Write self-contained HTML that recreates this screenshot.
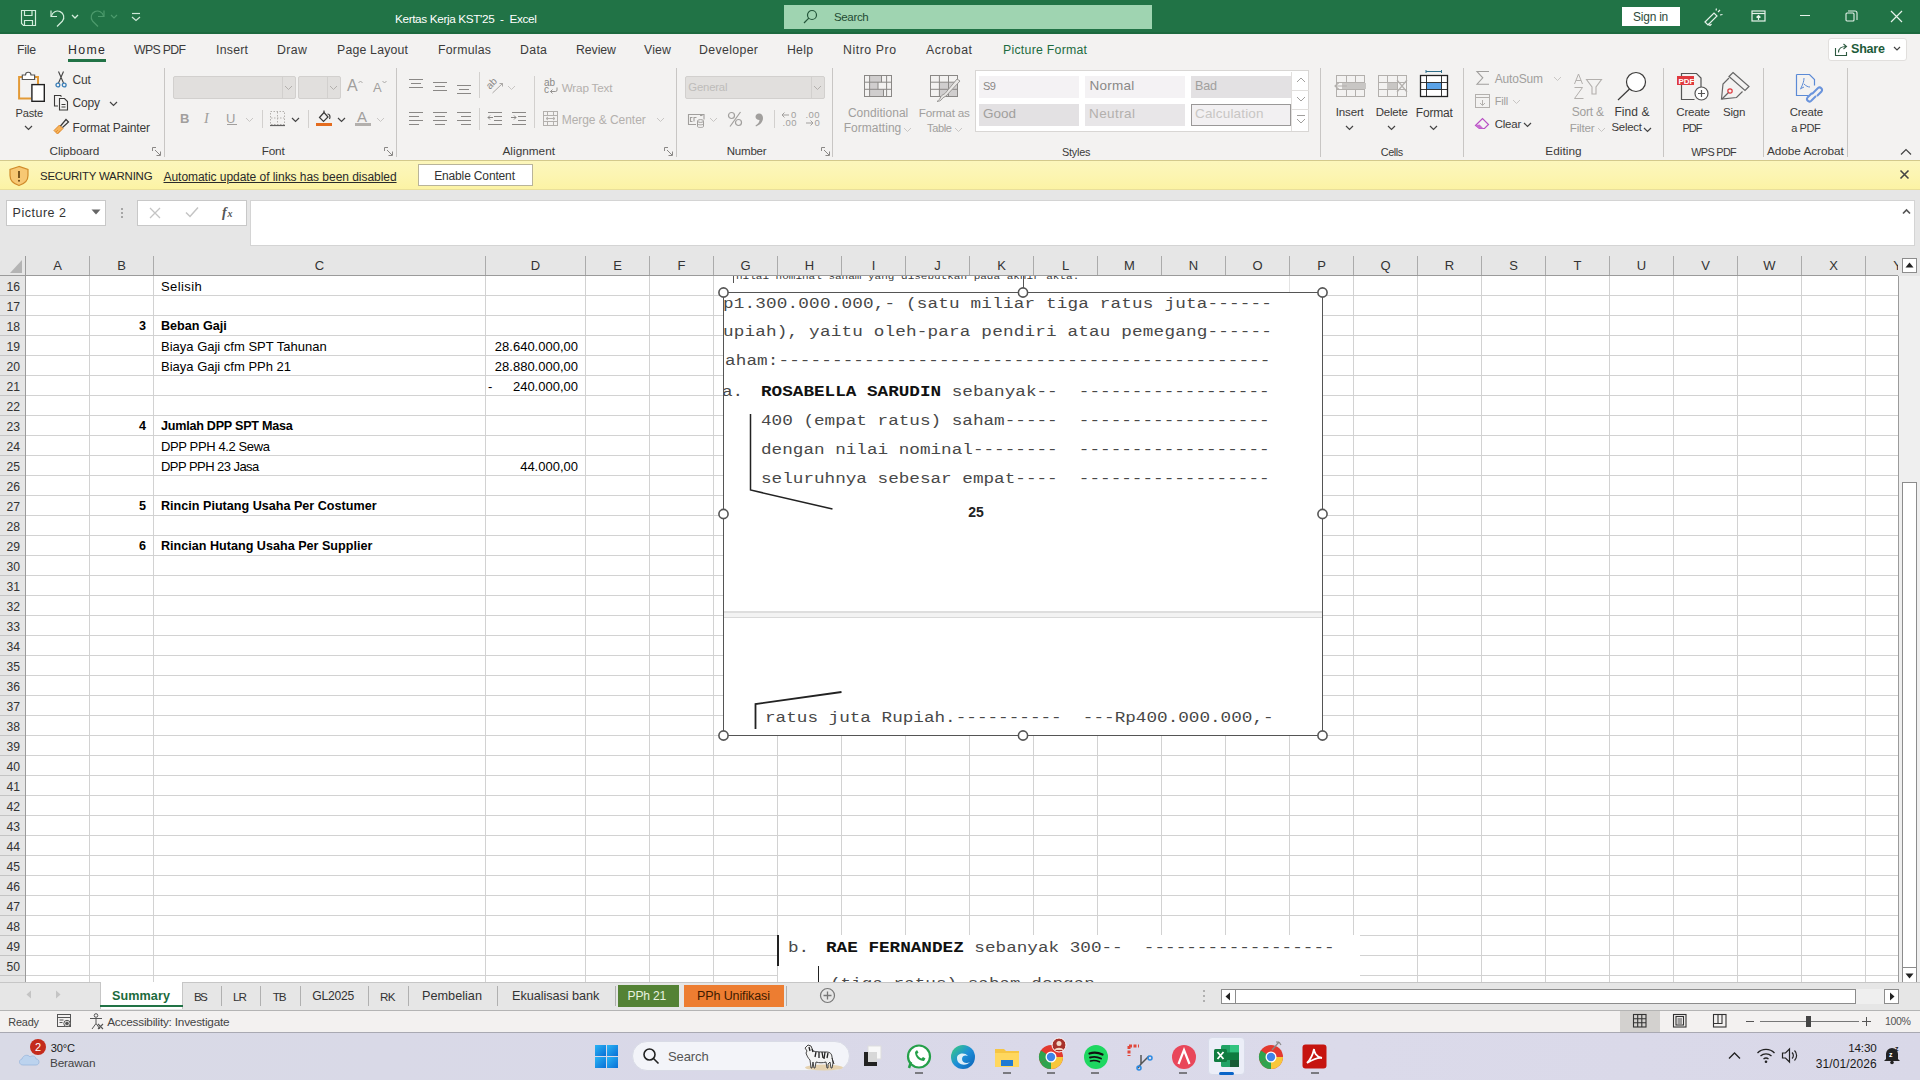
<!DOCTYPE html><html><head><meta charset="utf-8"><style>
html,body{margin:0;padding:0;width:1920px;height:1080px;overflow:hidden;background:#fff;}
body{position:relative;font-family:"Liberation Sans",sans-serif;}
.t{position:absolute;white-space:pre;line-height:1;}
.r{position:absolute;box-sizing:border-box;}
.s{position:absolute;overflow:visible;}
</style></head><body>
<div class="r" style="left:0px;top:0px;width:1920px;height:34px;background:#217346;"></div>
<div class="r" style="left:0px;top:32px;width:1920px;height:2px;background:#1c6a3f;"></div>
<svg class="s" style="left:19px;top:9px;" width="20" height="18" viewBox="0 0 20 18"><g fill="none" stroke="#d4eedd" stroke-width="1.2"><path d="M2.5 1.5h14v15h-12l-2-2z"/><path d="M5.5 1.5v5h7.5v-5"/><path d="M5.5 16.5v-5h8v5"/></g></svg>
<svg class="s" style="left:49px;top:8px;" width="18" height="20" viewBox="0 0 18 20"><g fill="none" stroke="#d4eedd" stroke-width="1.2"><path d="M2 2.5v6h6"/><path d="M2.5 8A6.2 6.2 0 1 1 13.5 13L8 18.5"/></g></svg>
<svg class="s" style="left:71px;top:14px;" width="8" height="6" viewBox="0 0 8 6"><path d="M1 1l3 3 3-3" fill="none" stroke="#d4eedd" stroke-width="1.3"/></svg>
<svg class="s" style="left:88px;top:8px;" width="18" height="20" viewBox="0 0 18 20"><g fill="none" stroke="#4c9a6c" stroke-width="1.2"><path d="M16 2.5v6h-6"/><path d="M15.5 8A6.2 6.2 0 1 0 4.5 13L10 18.5"/></g></svg>
<svg class="s" style="left:110px;top:14px;" width="8" height="6" viewBox="0 0 8 6"><path d="M1 1l3 3 3-3" fill="none" stroke="#4c9a6c" stroke-width="1.2"/></svg>
<svg class="s" style="left:130px;top:12px;" width="12" height="10" viewBox="0 0 12 10"><g fill="none" stroke="#cfe8d8" stroke-width="1.2"><path d="M2 1.5h8"/><path d="M2 5l4 3.5 4-3.5"/></g></svg>
<div class="t" style="top:12.53px;font-size:11.78px;color:#ffffff;font-weight:normal;font-family:'Liberation Sans', sans-serif;letter-spacing:-0.364px;left:395.0px;">Kertas Kerja KST'25  -  Excel</div>
<div class="r" style="left:784px;top:5px;width:368px;height:24px;background:#9fd4b1;"></div>
<svg class="s" style="left:802px;top:9px;" width="16" height="16" viewBox="0 0 16 16"><g fill="none" stroke="#24553a" stroke-width="1.2"><circle cx="10" cy="6" r="4.5"/><path d="M6.8 9.2L2 14"/></g></svg>
<div class="t" style="top:11.97px;font-size:11.5px;color:#1f4b33;font-weight:normal;font-family:'Liberation Sans', sans-serif;letter-spacing:-0.351px;left:834.0px;">Search</div>
<div class="r" style="left:1622px;top:7px;width:58px;height:19px;background:#ffffff;"></div>
<div class="t" style="top:11.60px;font-size:11.93px;color:#2d4a3b;font-weight:normal;font-family:'Liberation Sans', sans-serif;letter-spacing:-0.201px;left:1633.0px;">Sign in</div>
<svg class="s" style="left:1703px;top:8px;" width="22" height="18" viewBox="0 0 22 18"><g fill="none" stroke="#e6f2ea" stroke-width="1.2"><path d="M2 14l9-9 3 3-9 9z"/><path d="M5 16l2 1.5 1.5-1.5"/><path d="M15 4l2-2M17 7l2.5-.5M13 2.5l.5-2"/></g></svg>
<svg class="s" style="left:1751px;top:10px;" width="16" height="13" viewBox="0 0 16 13"><g fill="none" stroke="#e6f2ea" stroke-width="1.2"><rect x="1" y="1" width="13" height="10"/><path d="M1 3.5h13"/><path d="M7.5 10V5.5M5.5 7.5l2-2 2 2"/></g></svg>
<div class="r" style="left:1800px;top:15px;width:10px;height:1px;background:#e6f2ea;"></div>
<svg class="s" style="left:1845px;top:10px;" width="13" height="13" viewBox="0 0 13 13"><g fill="none" stroke="#e6f2ea" stroke-width="1.1"><rect x="1" y="3" width="8" height="8" rx="1"/><path d="M3 1h7a2 2 0 0 1 2 2v7"/></g></svg>
<svg class="s" style="left:1890px;top:10px;" width="13" height="13" viewBox="0 0 13 13"><g stroke="#e6f2ea" stroke-width="1.2"><path d="M1 1l11 11M12 1L1 12"/></g></svg>
<div class="r" style="left:0px;top:34px;width:1920px;height:126px;background:#f3f2f1;"></div>
<div class="t" style="top:43.59px;font-size:12.3px;color:#3b3b3b;font-weight:normal;font-family:'Liberation Sans', sans-serif;letter-spacing:-0.268px;left:17px;">File</div>
<div class="t" style="top:43.59px;font-size:12.3px;color:#2b2b2b;font-weight:normal;font-family:'Liberation Sans', sans-serif;letter-spacing:1.386px;left:68px;">Home</div>
<div class="t" style="top:43.59px;font-size:12.3px;color:#3b3b3b;font-weight:normal;font-family:'Liberation Sans', sans-serif;letter-spacing:-0.671px;left:134px;">WPS PDF</div>
<div class="t" style="top:43.59px;font-size:12.3px;color:#3b3b3b;font-weight:normal;font-family:'Liberation Sans', sans-serif;letter-spacing:0.25px;left:216px;">Insert</div>
<div class="t" style="top:43.59px;font-size:12.3px;color:#3b3b3b;font-weight:normal;font-family:'Liberation Sans', sans-serif;letter-spacing:0.426px;left:277px;">Draw</div>
<div class="t" style="top:43.59px;font-size:12.3px;color:#3b3b3b;font-weight:normal;font-family:'Liberation Sans', sans-serif;letter-spacing:0.194px;left:337px;">Page Layout</div>
<div class="t" style="top:43.59px;font-size:12.3px;color:#3b3b3b;font-weight:normal;font-family:'Liberation Sans', sans-serif;letter-spacing:0.244px;left:438px;">Formulas</div>
<div class="t" style="top:43.59px;font-size:12.3px;color:#3b3b3b;font-weight:normal;font-family:'Liberation Sans', sans-serif;letter-spacing:0.328px;left:520px;">Data</div>
<div class="t" style="top:43.59px;font-size:12.3px;color:#3b3b3b;font-weight:normal;font-family:'Liberation Sans', sans-serif;letter-spacing:-0.069px;left:576px;">Review</div>
<div class="t" style="top:43.59px;font-size:12.3px;color:#3b3b3b;font-weight:normal;font-family:'Liberation Sans', sans-serif;letter-spacing:0.185px;left:644px;">View</div>
<div class="t" style="top:43.59px;font-size:12.3px;color:#3b3b3b;font-weight:normal;font-family:'Liberation Sans', sans-serif;letter-spacing:0.364px;left:699px;">Developer</div>
<div class="t" style="top:43.59px;font-size:12.3px;color:#3b3b3b;font-weight:normal;font-family:'Liberation Sans', sans-serif;letter-spacing:0.241px;left:787px;">Help</div>
<div class="t" style="top:43.59px;font-size:12.3px;color:#3b3b3b;font-weight:normal;font-family:'Liberation Sans', sans-serif;letter-spacing:0.56px;left:843px;">Nitro Pro</div>
<div class="t" style="top:43.59px;font-size:12.3px;color:#3b3b3b;font-weight:normal;font-family:'Liberation Sans', sans-serif;letter-spacing:0.604px;left:926px;">Acrobat</div>
<div class="t" style="top:43.59px;font-size:12.3px;color:#1d6b40;font-weight:normal;font-family:'Liberation Sans', sans-serif;letter-spacing:0.259px;left:1003px;">Picture Format</div>
<div class="r" style="left:68px;top:59px;width:38px;height:3px;background:#217346;"></div>
<div class="r" style="left:1828px;top:38px;width:79px;height:23px;background:#ffffff;border:1px solid #e1dfdd;border-radius:3px;"></div>
<svg class="s" style="left:1834px;top:42px;" width="16" height="15" viewBox="0 0 16 15"><g fill="none" stroke="#2d5a40" stroke-width="1.1"><path d="M1.5 6v7.5h11V10"/><path d="M4.5 10.5c0-4 3-6 7.5-6"/><path d="M9.5 2l3 2.5-3 2.5"/></g></svg>
<div class="t" style="top:43.40px;font-size:12.52px;color:#1e5b3a;font-weight:bold;font-family:'Liberation Sans', sans-serif;letter-spacing:-0.201px;left:1851.0px;">Share</div>
<svg class="s" style="left:1893px;top:46px;" width="8" height="6" viewBox="0 0 8 6"><path d="M1 1l3 3 3-3" fill="none" stroke="#444" stroke-width="1.2"/></svg>
<div class="r" style="left:164px;top:68px;width:1px;height:89px;background:#c8c6c4;"></div>
<div class="r" style="left:396px;top:68px;width:1px;height:89px;background:#c8c6c4;"></div>
<div class="r" style="left:676px;top:68px;width:1px;height:89px;background:#c8c6c4;"></div>
<div class="r" style="left:832px;top:68px;width:1px;height:89px;background:#c8c6c4;"></div>
<div class="r" style="left:1320px;top:68px;width:1px;height:89px;background:#c8c6c4;"></div>
<div class="r" style="left:1463px;top:68px;width:1px;height:89px;background:#c8c6c4;"></div>
<div class="r" style="left:1663px;top:68px;width:1px;height:89px;background:#c8c6c4;"></div>
<div class="r" style="left:1763px;top:68px;width:1px;height:89px;background:#c8c6c4;"></div>
<div class="r" style="left:1847px;top:68px;width:1px;height:89px;background:#c8c6c4;"></div>
<div class="t" style="top:146.01px;font-size:11.8px;color:#3b3a39;font-weight:normal;font-family:'Liberation Sans', sans-serif;letter-spacing:-0.088px;left:49.6px;">Clipboard</div>
<div class="t" style="top:146.01px;font-size:11.8px;color:#3b3a39;font-weight:normal;font-family:'Liberation Sans', sans-serif;letter-spacing:-0.2px;left:261.7px;">Font</div>
<div class="t" style="top:146.01px;font-size:11.8px;color:#3b3a39;font-weight:normal;font-family:'Liberation Sans', sans-serif;letter-spacing:0.006px;left:502.5px;">Alignment</div>
<div class="t" style="top:146.24px;font-size:11.53px;color:#3b3a39;font-weight:normal;font-family:'Liberation Sans', sans-serif;letter-spacing:-0.198px;left:726.7px;">Number</div>
<div class="t" style="top:146.81px;font-size:10.86px;color:#3b3a39;font-weight:normal;font-family:'Liberation Sans', sans-serif;letter-spacing:-0.239px;left:1062.0px;">Styles</div>
<div class="t" style="top:146.81px;font-size:10.86px;color:#3b3a39;font-weight:normal;font-family:'Liberation Sans', sans-serif;letter-spacing:-0.416px;left:1380.8px;">Cells</div>
<div class="t" style="top:146.01px;font-size:11.8px;color:#3b3a39;font-weight:normal;font-family:'Liberation Sans', sans-serif;letter-spacing:0.049px;left:1545.3px;">Editing</div>
<div class="t" style="top:146.81px;font-size:10.86px;color:#3b3a39;font-weight:normal;font-family:'Liberation Sans', sans-serif;letter-spacing:-0.678px;left:1691.3px;">WPS PDF</div>
<div class="t" style="top:146.01px;font-size:11.8px;color:#3b3a39;font-weight:normal;font-family:'Liberation Sans', sans-serif;letter-spacing:-0.059px;left:1767.0px;">Adobe Acrobat</div>
<svg class="s" style="left:152px;top:147px;" width="9" height="9" viewBox="0 0 9 9"><g fill="none" stroke="#8a8886" stroke-width="1"><path d="M0.5 4V0.5H4"/><path d="M3 3l5 5M8.5 4.5v4h-4"/></g></svg>
<svg class="s" style="left:384px;top:147px;" width="9" height="9" viewBox="0 0 9 9"><g fill="none" stroke="#8a8886" stroke-width="1"><path d="M0.5 4V0.5H4"/><path d="M3 3l5 5M8.5 4.5v4h-4"/></g></svg>
<svg class="s" style="left:664px;top:147px;" width="9" height="9" viewBox="0 0 9 9"><g fill="none" stroke="#8a8886" stroke-width="1"><path d="M0.5 4V0.5H4"/><path d="M3 3l5 5M8.5 4.5v4h-4"/></g></svg>
<svg class="s" style="left:821px;top:147px;" width="9" height="9" viewBox="0 0 9 9"><g fill="none" stroke="#8a8886" stroke-width="1"><path d="M0.5 4V0.5H4"/><path d="M3 3l5 5M8.5 4.5v4h-4"/></g></svg>
<svg class="s" style="left:1900px;top:148px;" width="12" height="8" viewBox="0 0 12 8"><path d="M1 6.5l5-5 5 5" fill="none" stroke="#444" stroke-width="1.2"/></svg>
<svg class="s" style="left:14px;top:68px;" width="34" height="36" viewBox="0 0 34 36"><path d="M8.5 9H5.1V30.5H17" fill="none" stroke="#e39a36" stroke-width="2"/><path d="M20.6 9H24V16" fill="none" stroke="#e39a36" stroke-width="2"/><path d="M8.3 11.5V7H11.5A2.75 2.75 0 0 1 17 7H20.6V11.5Z" fill="#fff" stroke="#555" stroke-width="1.2"/><rect x="17.9" y="16.6" width="12.4" height="16.7" fill="#fff" stroke="#222" stroke-width="1.4"/></svg>
<div class="t" style="top:107.62px;font-size:11.08px;color:#3b3a39;font-weight:normal;font-family:'Liberation Sans', sans-serif;letter-spacing:-0.202px;left:15.6px;">Paste</div>
<svg class="s" style="left:24px;top:125px;" width="9" height="6" viewBox="0 0 9 6"><path d="M1 1l3.5 3.5 3.5-3.5" fill="none" stroke="#444" stroke-width="1.2"/></svg>
<svg class="s" style="left:54px;top:70px;" width="14" height="18" viewBox="0 0 14 18"><g fill="none"><path d="M4.5 1.5L9.5 13M9.5 1.5L4.5 13" stroke="#444" stroke-width="1.1"/><circle cx="3.9" cy="15" r="1.9" stroke="#3b7fb8" stroke-width="1.3"/><circle cx="10.2" cy="15" r="1.9" stroke="#3b7fb8" stroke-width="1.3"/></g></svg>
<div class="t" style="top:74.04px;font-size:12px;color:#3b3a39;font-weight:normal;font-family:'Liberation Sans', sans-serif;letter-spacing:-0.18px;left:72.5px;">Cut</div>
<svg class="s" style="left:53px;top:94px;" width="17" height="17" viewBox="0 0 17 17"><g fill="none" stroke="#3b3a39" stroke-width="1.1"><path d="M5 12H1.5V1.5h6l1 1"/><path d="M6.5 4.5h5l3 3v8.5h-8z"/><path d="M8.5 10.5h4M8.5 13h4"/></g></svg>
<div class="t" style="top:97.34px;font-size:12px;color:#3b3a39;font-weight:normal;font-family:'Liberation Sans', sans-serif;letter-spacing:-0.173px;left:72.5px;">Copy</div>
<svg class="s" style="left:109px;top:101px;" width="9" height="6" viewBox="0 0 9 6"><path d="M1 1l3.5 3.5 3.5-3.5" fill="none" stroke="#444" stroke-width="1.2"/></svg>
<svg class="s" style="left:52px;top:117px;" width="18" height="18" viewBox="0 0 18 18"><path d="M2 13.5L7.5 8L11 11.5L5.5 17Z" fill="#f6b25a" stroke="#e0892a" stroke-width="1"/><path d="M8.5 9L14 2.5L16.5 5L10.5 10.5" fill="none" stroke="#3b3a39" stroke-width="1.2"/><path d="M4 15l2-2M6 16l2-2" stroke="#e0892a" stroke-width="0.8"/></svg>
<div class="t" style="top:121.84px;font-size:12px;color:#3b3a39;font-weight:normal;font-family:'Liberation Sans', sans-serif;letter-spacing:-0.145px;left:72.5px;">Format Painter</div>
<div class="r" style="left:173px;top:76px;width:123px;height:23px;background:#e1dfdd;border:1px solid #d2d0ce;border-radius:2px;"></div>
<div class="r" style="left:282px;top:77px;width:1px;height:21px;background:#d2d0ce;"></div>
<svg class="s" style="left:284px;top:85px;" width="9" height="6" viewBox="0 0 9 6"><path d="M1 1l3.5 3.5 3.5-3.5" fill="none" stroke="#b3b0ad" stroke-width="1"/></svg>
<div class="r" style="left:298px;top:76px;width:43px;height:23px;background:#e1dfdd;border:1px solid #d2d0ce;border-radius:2px;"></div>
<div class="r" style="left:327px;top:77px;width:1px;height:21px;background:#d2d0ce;"></div>
<svg class="s" style="left:329px;top:85px;" width="9" height="6" viewBox="0 0 9 6"><path d="M1 1l3.5 3.5 3.5-3.5" fill="none" stroke="#b3b0ad" stroke-width="1"/></svg>
<div class="t" style="top:78.46px;font-size:16px;color:#a19f9d;font-weight:normal;font-family:'Liberation Sans', sans-serif;left:347px;">A</div>
<svg class="s" style="left:358px;top:80px;" width="5" height="4" viewBox="0 0 5 4"><path d="M0.5 3L2.5 1L4.5 3" fill="none" stroke="#a19f9d" stroke-width="0.9"/></svg>
<div class="t" style="top:81.00px;font-size:13px;color:#a19f9d;font-weight:normal;font-family:'Liberation Sans', sans-serif;left:373px;">A</div>
<svg class="s" style="left:382px;top:80px;" width="5" height="4" viewBox="0 0 5 4"><path d="M0.5 1L2.5 3L4.5 1" fill="none" stroke="#a19f9d" stroke-width="0.9"/></svg>
<div class="t" style="top:112.00px;font-size:13px;color:#a19f9d;font-weight:bold;font-family:'Liberation Sans', sans-serif;left:180px;">B</div>
<div class="t" style="top:110.73px;font-size:14.5px;color:#a19f9d;font-weight:normal;font-family:'Liberation Sans', sans-serif;left:204px;font-style:italic;font-family:'Liberation Serif',serif;">I</div>
<div class="t" style="top:111.50px;font-size:13px;color:#a19f9d;font-weight:normal;font-family:'Liberation Sans', sans-serif;left:226px;">U</div>
<div class="r" style="left:227px;top:124px;width:10px;height:1px;background:#a19f9d;"></div>
<svg class="s" style="left:245px;top:117px;" width="9" height="6" viewBox="0 0 9 6"><path d="M1 1l3.5 3.5 3.5-3.5" fill="none" stroke="#c8c6c4" stroke-width="1"/></svg>
<div class="r" style="left:262px;top:110px;width:1px;height:18px;background:#d2d0ce;"></div>
<svg class="s" style="left:269px;top:110px;" width="17" height="17" viewBox="0 0 17 17"><g fill="none" stroke="#b3b0ad" stroke-width="1" stroke-dasharray="1.5 1.5"><rect x="1.5" y="1.5" width="14" height="13"/><path d="M8.5 2v13M2 8h13"/></g><path d="M1 15.5h15" stroke="#616161" stroke-width="1.2"/></svg>
<svg class="s" style="left:291px;top:117px;" width="9" height="6" viewBox="0 0 9 6"><path d="M1 1l3.5 3.5 3.5-3.5" fill="none" stroke="#444" stroke-width="1.2"/></svg>
<div class="r" style="left:308px;top:110px;width:1px;height:18px;background:#d2d0ce;"></div>
<svg class="s" style="left:315px;top:109px;" width="18" height="19" viewBox="0 0 18 19"><g fill="none" stroke="#3b3a39" stroke-width="1.2"><path d="M4.5 8.5L9 3.5L13 8L8.5 12.5Z"/><path d="M9 3.5V1.5"/><path d="M12.5 5c2.5 0 3 3 2 5"/></g><rect x="1" y="14" width="16" height="3" fill="#e46c1e"/></svg>
<svg class="s" style="left:337px;top:117px;" width="9" height="6" viewBox="0 0 9 6"><path d="M1 1l3.5 3.5 3.5-3.5" fill="none" stroke="#444" stroke-width="1.2"/></svg>
<div class="t" style="top:109.30px;font-size:15px;color:#a19f9d;font-weight:normal;font-family:'Liberation Sans', sans-serif;left:357px;">A</div>
<div class="r" style="left:355px;top:123px;width:16px;height:3px;background:#b3b0ad;"></div>
<svg class="s" style="left:376px;top:117px;" width="9" height="6" viewBox="0 0 9 6"><path d="M1 1l3.5 3.5 3.5-3.5" fill="none" stroke="#c8c6c4" stroke-width="1"/></svg>
<svg class="s" style="left:408px;top:78px;" width="16" height="16" viewBox="0 0 16 16"><path d="M1 1.5h14" stroke="#8a8886" stroke-width="1"/><path d="M3 5.5h10" stroke="#8a8886" stroke-width="1"/><path d="M1 9.5h14" stroke="#8a8886" stroke-width="1"/></svg>
<svg class="s" style="left:432px;top:81px;" width="16" height="16" viewBox="0 0 16 16"><path d="M1 1.5h14" stroke="#8a8886" stroke-width="1"/><path d="M3 5.5h10" stroke="#8a8886" stroke-width="1"/><path d="M1 9.5h14" stroke="#8a8886" stroke-width="1"/></svg>
<svg class="s" style="left:456px;top:84px;" width="16" height="16" viewBox="0 0 16 16"><path d="M1 1.5h14" stroke="#8a8886" stroke-width="1"/><path d="M3 5.5h10" stroke="#8a8886" stroke-width="1"/><path d="M1 9.5h14" stroke="#8a8886" stroke-width="1"/></svg>
<svg class="s" style="left:408px;top:111px;" width="16" height="16" viewBox="0 0 16 16"><path d="M1 1.5h14" stroke="#8a8886" stroke-width="1"/><path d="M1 5.5h10" stroke="#8a8886" stroke-width="1"/><path d="M1 9.5h14" stroke="#8a8886" stroke-width="1"/><path d="M1 13.5h10" stroke="#8a8886" stroke-width="1"/></svg>
<svg class="s" style="left:432px;top:111px;" width="16" height="16" viewBox="0 0 16 16"><path d="M1 1.5h14" stroke="#8a8886" stroke-width="1"/><path d="M3 5.5h10" stroke="#8a8886" stroke-width="1"/><path d="M1 9.5h14" stroke="#8a8886" stroke-width="1"/><path d="M3 13.5h10" stroke="#8a8886" stroke-width="1"/></svg>
<svg class="s" style="left:456px;top:111px;" width="16" height="16" viewBox="0 0 16 16"><path d="M1 1.5h14" stroke="#8a8886" stroke-width="1"/><path d="M5 5.5h10" stroke="#8a8886" stroke-width="1"/><path d="M1 9.5h14" stroke="#8a8886" stroke-width="1"/><path d="M5 13.5h10" stroke="#8a8886" stroke-width="1"/></svg>
<div class="r" style="left:479px;top:72px;width:1px;height:26px;background:#d2d0ce;"></div>
<div class="r" style="left:479px;top:108px;width:1px;height:22px;background:#d2d0ce;"></div>
<svg class="s" style="left:485px;top:76px;" width="22" height="20" viewBox="0 0 22 20"><text x="7" y="8" font-size="10" font-family="Liberation Sans" fill="#8a8886" text-anchor="middle" dominant-baseline="middle" transform="rotate(-45 7 8)">ab</text><path d="M7.5 17L17.5 7.5M14.5 7.5H17.5V10.5" fill="none" stroke="#a19f9d" stroke-width="0.9"/></svg>
<svg class="s" style="left:507px;top:85px;" width="9" height="6" viewBox="0 0 9 6"><path d="M1 1l3.5 3.5 3.5-3.5" fill="none" stroke="#c8c6c4" stroke-width="1"/></svg>
<svg class="s" style="left:487px;top:111px;" width="16" height="16" viewBox="0 0 16 16"><path d="M1 1.5h14" stroke="#8a8886" stroke-width="1"/><path d="M7 5.5h8" stroke="#8a8886" stroke-width="1"/><path d="M7 9.5h8" stroke="#8a8886" stroke-width="1"/><path d="M1 13.5h14" stroke="#8a8886" stroke-width="1"/></svg>
<svg class="s" style="left:487px;top:114px;" width="7" height="8" viewBox="0 0 7 8"><path d="M6 3.5H1M3 1.5L1 3.5l2 2" fill="none" stroke="#8a8886" stroke-width="1"/></svg>
<svg class="s" style="left:511px;top:111px;" width="16" height="16" viewBox="0 0 16 16"><path d="M1 1.5h14" stroke="#8a8886" stroke-width="1"/><path d="M7 5.5h8" stroke="#8a8886" stroke-width="1"/><path d="M7 9.5h8" stroke="#8a8886" stroke-width="1"/><path d="M1 13.5h14" stroke="#8a8886" stroke-width="1"/></svg>
<svg class="s" style="left:511px;top:114px;" width="7" height="8" viewBox="0 0 7 8"><path d="M0 3.5h5M3 1.5l2 2-2 2" fill="none" stroke="#8a8886" stroke-width="1"/></svg>
<div class="r" style="left:534px;top:76px;width:1px;height:52px;background:#d2d0ce;"></div>
<svg class="s" style="left:543px;top:77px;" width="16" height="18" viewBox="0 0 16 18"><text x="1" y="8.5" font-size="10" font-family="Liberation Sans" fill="#8a8886">ab</text><text x="1" y="16" font-size="10" font-family="Liberation Sans" fill="#8a8886">c</text><path d="M14 10.5v2.5a1.5 1.5 0 0 1-1.5 1.5H7.5M9.5 12.5l-2 2 2 2" fill="none" stroke="#8a8886" stroke-width="0.9"/></svg>
<div class="t" style="top:81.76px;font-size:11.74px;color:#b3b0ad;font-weight:normal;font-family:'Liberation Sans', sans-serif;letter-spacing:-0.202px;left:561.7px;">Wrap Text</div>
<svg class="s" style="left:542px;top:110px;" width="17" height="17" viewBox="0 0 17 17"><g fill="none" stroke="#b3b0ad" stroke-width="1"><rect x="1.5" y="1.5" width="14" height="14"/><path d="M1.5 5.5h14M1.5 11.5h14M5.5 1.5v4M11.5 1.5v4M5.5 11.5v4M11.5 11.5v4"/><path d="M4 8.5h9M6 7l-2 1.5L6 10M11 7l2 1.5L11 10"/></g></svg>
<div class="t" style="top:114.04px;font-size:12px;color:#b3b0ad;font-weight:normal;font-family:'Liberation Sans', sans-serif;letter-spacing:-0.048px;left:561.7px;">Merge &amp; Center</div>
<svg class="s" style="left:656px;top:117px;" width="9" height="6" viewBox="0 0 9 6"><path d="M1 1l3.5 3.5 3.5-3.5" fill="none" stroke="#c8c6c4" stroke-width="1"/></svg>
<div class="r" style="left:685px;top:76px;width:140px;height:23px;background:#e1dfdd;border:1px solid #d2d0ce;border-radius:2px;"></div>
<div class="r" style="left:811px;top:77px;width:1px;height:21px;background:#d2d0ce;"></div>
<svg class="s" style="left:813px;top:85px;" width="9" height="6" viewBox="0 0 9 6"><path d="M1 1l3.5 3.5 3.5-3.5" fill="none" stroke="#b3b0ad" stroke-width="1"/></svg>
<div class="t" style="top:82.09px;font-size:11.35px;color:#bebcba;font-weight:normal;font-family:'Liberation Sans', sans-serif;letter-spacing:-0.201px;left:688.3px;">General</div>
<svg class="s" style="left:687px;top:112px;" width="19" height="16" viewBox="0 0 19 16"><g fill="none" stroke="#a19f9d" stroke-width="1.1"><path d="M9 12.5H1.5V2.5h15.5v5"/><path d="M5.5 5.5h-2v4h2M7 9.5v-4h2.5"/><path d="M13 3.5h2.5"/></g><g fill="#f3f2f1" stroke="#a19f9d" stroke-width="1"><path d="M10.5 9v5.5c0 1.3 6 1.3 6 0V9"/><ellipse cx="13.5" cy="9" rx="3" ry="1.4"/><path d="M10.5 11.8c0 1.3 6 1.3 6 0" fill="none"/></g></svg>
<svg class="s" style="left:709px;top:117px;" width="9" height="6" viewBox="0 0 9 6"><path d="M1 1l3.5 3.5 3.5-3.5" fill="none" stroke="#c8c6c4" stroke-width="1"/></svg>
<svg class="s" style="left:727px;top:111px;" width="17" height="17" viewBox="0 0 17 17"><g fill="none" stroke="#a19f9d" stroke-width="1.2"><circle cx="4.5" cy="4.5" r="3"/><circle cx="11.5" cy="11.5" r="3"/><path d="M13.5 1L3 15.5"/></g></svg>
<svg class="s" style="left:752px;top:112px;" width="12" height="15" viewBox="0 0 12 15"><path d="M7 1.5c2.5 0 4 2 4 4.5 0 4-3 7-7 8.5l-.5-1c2.5-1.5 4-3.5 4-5.5-2.5 0-4-1.2-4-3.2C3.5 2.8 5 1.5 7 1.5z" fill="#a19f9d"/></svg>
<div class="r" style="left:774px;top:110px;width:1px;height:18px;background:#d2d0ce;"></div>
<svg class="s" style="left:781px;top:110px;" width="18" height="18" viewBox="0 0 18 18"><g fill="none" stroke="#a19f9d" stroke-width="1"><path d="M1 5h7M3.5 2.5L1 5l2.5 2.5"/></g><text x="10" y="8" font-size="9.5" font-family="Liberation Sans" fill="#a19f9d" textLength="6">0</text><text x="1.5" y="16" font-size="9.5" font-family="Liberation Sans" fill="#a19f9d" textLength="14">.00</text></svg>
<svg class="s" style="left:804px;top:110px;" width="18" height="18" viewBox="0 0 18 18"><text x="1.5" y="8" font-size="9.5" font-family="Liberation Sans" fill="#a19f9d" textLength="14">.00</text><g fill="none" stroke="#a19f9d" stroke-width="1"><path d="M2 13h7M6.5 10.5L9 13l-2.5 2.5"/></g><text x="10.5" y="16" font-size="9.5" font-family="Liberation Sans" fill="#a19f9d" textLength="6">0</text></svg>
<svg class="s" style="left:863px;top:74px;" width="30" height="24" viewBox="0 0 30 24"><rect x="6.6" y="1.5" width="11.9" height="6.7" fill="#d0cece"/><rect x="6.6" y="8.2" width="8.4" height="7.1" fill="#d0cece"/><rect x="6.6" y="15.3" width="13.9" height="7.2" fill="#d0cece"/><g fill="none" stroke="#8a8886" stroke-width="1"><rect x="1.5" y="1.5" width="27" height="21"/><path d="M1.5 8.2h27M1.5 15.3h27M6.6 1.5v21M18.5 1.5v6.7M15 8.2v7.1M20.5 15.3v7.2M23.6 1.5v21"/></g></svg>
<div class="t" style="top:106.54px;font-size:12px;color:#a19f9d;font-weight:normal;font-family:'Liberation Sans', sans-serif;letter-spacing:0.034px;left:847.9px;">Conditional</div>
<div class="t" style="top:121.84px;font-size:12px;color:#a19f9d;font-weight:normal;font-family:'Liberation Sans', sans-serif;letter-spacing:0.016px;left:843.75px;">Formatting</div>
<svg class="s" style="left:903px;top:127px;" width="9" height="6" viewBox="0 0 9 6"><path d="M1 1l3.5 3.5 3.5-3.5" fill="none" stroke="#c8c6c4" stroke-width="1"/></svg>
<svg class="s" style="left:929px;top:74px;" width="34" height="30" viewBox="0 0 34 30"><rect x="10.4" y="8.2" width="18.3" height="14.3" fill="#d0cece"/><g fill="none" stroke="#8a8886" stroke-width="1"><rect x="1.5" y="1.5" width="27" height="21"/><path d="M1.5 8.2h27M1.5 15.3h27M10.4 1.5v21M19.5 1.5v21"/></g><path d="M31 7L17 22c-1 1-3 1-4 3-1 1.5-3 2.5-5 2.5 2-1 3-3 4-5 1-2 3-2 4-3L28 5z" fill="#e9e7e5" stroke="#9a9896" stroke-width="1"/></svg>
<div class="t" style="top:106.76px;font-size:11.74px;color:#a19f9d;font-weight:normal;font-family:'Liberation Sans', sans-serif;letter-spacing:-0.197px;left:918.75px;">Format as</div>
<div class="t" style="top:122.65px;font-size:11.04px;color:#a19f9d;font-weight:normal;font-family:'Liberation Sans', sans-serif;letter-spacing:-0.346px;left:927.0px;">Table</div>
<svg class="s" style="left:954px;top:127px;" width="9" height="6" viewBox="0 0 9 6"><path d="M1 1l3.5 3.5 3.5-3.5" fill="none" stroke="#c8c6c4" stroke-width="1"/></svg>
<div class="r" style="left:975px;top:70px;width:334px;height:62px;background:#ffffff;border:1px solid #d8d6d4;"></div>
<div class="r" style="left:979px;top:76px;width:100px;height:22px;background:#f4f2f4;"></div>
<div class="t" style="top:81.45px;font-size:11.04px;color:#8a8886;font-weight:normal;font-family:'Liberation Sans', sans-serif;letter-spacing:-0.524px;left:983.0px;">S9</div>
<div class="r" style="left:1085px;top:76px;width:100px;height:22px;background:#f4f2f4;"></div>
<div class="t" style="top:79.37px;font-size:13.5px;color:#8a8886;font-weight:normal;font-family:'Liberation Sans', sans-serif;letter-spacing:0.273px;left:1089.5px;">Normal</div>
<div class="r" style="left:1191px;top:76px;width:100px;height:22px;background:#e3e1e3;"></div>
<div class="t" style="top:80.15px;font-size:12.58px;color:#a19f9d;font-weight:normal;font-family:'Liberation Sans', sans-serif;letter-spacing:-0.196px;left:1195.0px;">Bad</div>
<div class="r" style="left:979px;top:104px;width:100px;height:22px;background:#e3e1e3;"></div>
<div class="t" style="top:107.37px;font-size:13.5px;color:#a19f9d;font-weight:normal;font-family:'Liberation Sans', sans-serif;letter-spacing:-0.003px;left:983.0px;">Good</div>
<div class="r" style="left:1085px;top:104px;width:100px;height:22px;background:#e8e6e8;"></div>
<div class="t" style="top:107.37px;font-size:13.5px;color:#b3b0ad;font-weight:normal;font-family:'Liberation Sans', sans-serif;letter-spacing:0.41px;left:1089.0px;">Neutral</div>
<div class="r" style="left:1191px;top:104px;width:100px;height:22px;background:#f2f0f2;border:1px solid #9a9898;"></div>
<div class="t" style="top:107.37px;font-size:13.5px;color:#c8c6c4;font-weight:normal;font-family:'Liberation Sans', sans-serif;letter-spacing:0.174px;left:1195.0px;">Calculation</div>
<div class="r" style="left:1291px;top:72px;width:1px;height:59px;background:#e1dfdd;"></div>
<div class="r" style="left:1292px;top:90px;width:17px;height:1px;background:#e1dfdd;"></div>
<div class="r" style="left:1292px;top:109px;width:17px;height:1px;background:#e1dfdd;"></div>
<svg class="s" style="left:1296px;top:77px;" width="10" height="6" viewBox="0 0 10 6"><path d="M1 5l4-4 4 4" fill="none" stroke="#a19f9d" stroke-width="1"/></svg>
<svg class="s" style="left:1296px;top:96px;" width="10" height="6" viewBox="0 0 10 6"><path d="M1 1l4 4 4-4" fill="none" stroke="#a19f9d" stroke-width="1"/></svg>
<svg class="s" style="left:1296px;top:114px;" width="10" height="10" viewBox="0 0 10 10"><path d="M1 1.5h8M1 5l4 4 4-4" fill="none" stroke="#a19f9d" stroke-width="1"/></svg>
<svg class="s" style="left:1334px;top:74px;" width="33" height="25" viewBox="0 0 33 25"><g fill="none" stroke="#b3b0ad" stroke-width="1"><rect x="2.5" y="1.5" width="28" height="21"/><path d="M2.5 8.5h28M2.5 15.5h28M12.5 1.5v21M21.5 1.5v21"/></g><rect x="8" y="9" width="24" height="6" fill="#c8c6c4"/><path d="M1 12h12M5 8.5L1 12l4 3.5" fill="none" stroke="#b3b0ad" stroke-width="1.2"/></svg>
<div class="t" style="top:106.90px;font-size:11.58px;color:#3b3a39;font-weight:normal;font-family:'Liberation Sans', sans-serif;letter-spacing:-0.2px;left:1335.8px;">Insert</div>
<svg class="s" style="left:1345px;top:125px;" width="9" height="6" viewBox="0 0 9 6"><path d="M1 1l3.5 3.5 3.5-3.5" fill="none" stroke="#444" stroke-width="1.2"/></svg>
<svg class="s" style="left:1377px;top:74px;" width="33" height="25" viewBox="0 0 33 25"><g fill="none" stroke="#b3b0ad" stroke-width="1"><rect x="1.5" y="1.5" width="28" height="21"/><path d="M1.5 8.5h28M1.5 15.5h28M10.5 1.5v21M20.5 1.5v21"/></g><rect x="10" y="9" width="10" height="6" fill="#c8c6c4"/><path d="M20 6l10 12M30 6L20 18" stroke="#b3b0ad" stroke-width="1.2"/></svg>
<div class="t" style="top:107.01px;font-size:11.45px;color:#3b3a39;font-weight:normal;font-family:'Liberation Sans', sans-serif;letter-spacing:-0.198px;left:1375.8px;">Delete</div>
<svg class="s" style="left:1387px;top:125px;" width="9" height="6" viewBox="0 0 9 6"><path d="M1 1l3.5 3.5 3.5-3.5" fill="none" stroke="#444" stroke-width="1.2"/></svg>
<svg class="s" style="left:1419px;top:69px;" width="30" height="30" viewBox="0 0 30 30"><path d="M7 2.5h15.5M7 1v3M22.5 1v3" stroke="#2f6f8a" stroke-width="1" fill="none"/><rect x="1.5" y="6.5" width="27" height="21" fill="#fff" stroke="#222" stroke-width="1.3"/><rect x="7.5" y="13.5" width="15" height="7" fill="#5aa3e8"/><path d="M1.5 13.5h27M1.5 20.5h27M7.5 6.5v21M22.5 6.5v21" stroke="#222" stroke-width="0.9"/></svg>
<div class="t" style="top:106.54px;font-size:12px;color:#3b3a39;font-weight:normal;font-family:'Liberation Sans', sans-serif;letter-spacing:-0.176px;left:1415.8px;">Format</div>
<svg class="s" style="left:1429px;top:125px;" width="9" height="6" viewBox="0 0 9 6"><path d="M1 1l3.5 3.5 3.5-3.5" fill="none" stroke="#444" stroke-width="1.2"/></svg>
<svg class="s" style="left:1475px;top:70px;" width="16" height="16" viewBox="0 0 16 16"><path d="M14 1.5H2L7.8 7.8L2 14.2H14" fill="none" stroke="#a19f9d" stroke-width="1.1"/></svg>
<div class="t" style="top:72.54px;font-size:12px;color:#a19f9d;font-weight:normal;font-family:'Liberation Sans', sans-serif;letter-spacing:-0.18px;left:1494.7px;">AutoSum</div>
<svg class="s" style="left:1553px;top:76px;" width="9" height="6" viewBox="0 0 9 6"><path d="M1 1l3.5 3.5 3.5-3.5" fill="none" stroke="#c8c6c4" stroke-width="1"/></svg>
<svg class="s" style="left:1474px;top:93px;" width="17" height="16" viewBox="0 0 17 16"><g fill="none" stroke="#b3b0ad" stroke-width="1"><rect x="1.5" y="1.5" width="14" height="13"/><path d="M1.5 4.5h14M8.5 7v5M6 10l2.5 2.5L11 10"/></g></svg>
<div class="t" style="top:96.24px;font-size:11.06px;color:#a19f9d;font-weight:normal;font-family:'Liberation Sans', sans-serif;letter-spacing:-0.201px;left:1494.7px;">Fill</div>
<svg class="s" style="left:1512px;top:99px;" width="9" height="6" viewBox="0 0 9 6"><path d="M1 1l3.5 3.5 3.5-3.5" fill="none" stroke="#c8c6c4" stroke-width="1"/></svg>
<svg class="s" style="left:1474px;top:116px;" width="17" height="16" viewBox="0 0 17 16"><path d="M1.5 9.5l7-7 6 6-4 4h-5z" fill="none" stroke="#b84fc4" stroke-width="1.2"/><path d="M1.5 9.5l3 3h5l-4-4z" fill="#c76ad1"/></svg>
<div class="t" style="top:118.82px;font-size:11.44px;color:#3b3a39;font-weight:normal;font-family:'Liberation Sans', sans-serif;letter-spacing:-0.198px;left:1494.7px;">Clear</div>
<svg class="s" style="left:1523px;top:122px;" width="9" height="6" viewBox="0 0 9 6"><path d="M1 1l3.5 3.5 3.5-3.5" fill="none" stroke="#444" stroke-width="1.2"/></svg>
<svg class="s" style="left:1573px;top:73px;" width="12" height="27" viewBox="0 0 12 27"><g fill="none" stroke="#b3b0ad" stroke-width="1"><path d="M1.5 11L5.5 1L9.5 11M3 7.5h5"/><path d="M1.5 14.5h8L1.5 25.5h9"/></g></svg>
<svg class="s" style="left:1585px;top:78px;" width="18" height="18" viewBox="0 0 18 18"><path d="M1.5 1.5h15l-5.5 7.5v7h-4v-7z" fill="none" stroke="#b3b0ad" stroke-width="1.1"/></svg>
<div class="t" style="top:106.34px;font-size:12px;color:#a19f9d;font-weight:normal;font-family:'Liberation Sans', sans-serif;letter-spacing:-0.232px;left:1571.8px;">Sort &amp;</div>
<div class="t" style="top:122.09px;font-size:11.71px;color:#a19f9d;font-weight:normal;font-family:'Liberation Sans', sans-serif;letter-spacing:-0.199px;left:1569.7px;">Filter</div>
<svg class="s" style="left:1597px;top:127px;" width="9" height="6" viewBox="0 0 9 6"><path d="M1 1l3.5 3.5 3.5-3.5" fill="none" stroke="#c8c6c4" stroke-width="1"/></svg>
<svg class="s" style="left:1617px;top:71px;" width="32" height="31" viewBox="0 0 32 31"><g fill="none" stroke="#3b3a39" stroke-width="1.2"><circle cx="19" cy="11" r="9.5" fill="#fff"/><path d="M12.5 18L1 29"/></g></svg>
<div class="t" style="top:106.34px;font-size:12px;color:#3b3a39;font-weight:normal;font-family:'Liberation Sans', sans-serif;letter-spacing:0.044px;left:1614.5px;">Find &amp;</div>
<div class="t" style="top:122.38px;font-size:11.37px;color:#3b3a39;font-weight:normal;font-family:'Liberation Sans', sans-serif;letter-spacing:-0.202px;left:1611.4px;">Select</div>
<svg class="s" style="left:1643px;top:127px;" width="9" height="6" viewBox="0 0 9 6"><path d="M1 1l3.5 3.5 3.5-3.5" fill="none" stroke="#444" stroke-width="1.2"/></svg>
<svg class="s" style="left:1677px;top:71px;" width="34" height="31" viewBox="0 0 34 31"><path d="M4.5 6.5v22h13" fill="none" stroke="#555" stroke-width="1.2"/><path d="M4.5 6.5V2.5h15l4.5 4.5v10" fill="none" stroke="#555" stroke-width="1.2"/><rect x="0" y="5" width="17" height="9" fill="#e0393e"/><text x="1.5" y="12.5" font-size="8" font-family="Liberation Sans" font-weight="bold" fill="#fff">PDF</text><circle cx="24.5" cy="22.5" r="6.5" fill="#fff" stroke="#555" stroke-width="1.2"/><path d="M24.5 19v7M21 22.5h7" stroke="#555" stroke-width="1.2"/></svg>
<div class="t" style="top:106.91px;font-size:11.57px;color:#3b3a39;font-weight:normal;font-family:'Liberation Sans', sans-serif;letter-spacing:-0.202px;left:1676.3px;">Create</div>
<div class="t" style="top:123.15px;font-size:11.04px;color:#3b3a39;font-weight:normal;font-family:'Liberation Sans', sans-serif;letter-spacing:-1.04px;left:1682.5px;">PDF</div>
<svg class="s" style="left:1720px;top:71px;" width="32" height="31" viewBox="0 0 32 31"><g fill="none" stroke="#666" stroke-width="1.2"><path d="M13 1.5l16 14-4 4-16-14z" transform="rotate(0)"/><path d="M9 7l-6 6-1.5 15 15-1.5 6-6"/><path d="M2 28l7-7"/></g><circle cx="10" cy="20" r="2.2" fill="none" stroke="#e0393e" stroke-width="1.2"/></svg>
<div class="t" style="top:106.92px;font-size:11.55px;color:#3b3a39;font-weight:normal;font-family:'Liberation Sans', sans-serif;letter-spacing:-0.2px;left:1723.0px;">Sign</div>
<svg class="s" style="left:1794px;top:72px;" width="30" height="31" viewBox="0 0 30 31"><path d="M2.5 2.5h13l5 5v6M2.5 2.5v21h12" fill="none" stroke="#5b8ad6" stroke-width="1.2"/><path d="M7 16c2-4 3-7 3-10M10 12c2 2 4 3 6 3M6 17l4-2" fill="none" stroke="#5b8ad6" stroke-width="1"/><g fill="none" stroke="#6a94dc" stroke-width="2"><path d="M18 22l6-6a2.5 2.5 0 0 1 3.5 3.5L23 24"/><path d="M22 24l-5 5a2.5 2.5 0 0 1-3.5-3.5L18 21"/></g></svg>
<div class="t" style="top:107.02px;font-size:11.43px;color:#3b3a39;font-weight:normal;font-family:'Liberation Sans', sans-serif;letter-spacing:-0.198px;left:1789.7px;">Create</div>
<div class="t" style="top:123.15px;font-size:11.04px;color:#3b3a39;font-weight:normal;font-family:'Liberation Sans', sans-serif;letter-spacing:-0.45px;left:1791.3px;">a PDF</div>
<div class="r" style="left:0;top:160px;width:1920px;height:30px;background:linear-gradient(180deg,#fcf6bc 0%,#fcf5b2 50%,#fcf3a4 100%);border-top:1px solid #d3c98c;border-bottom:1px solid #e9df9a;"></div>
<svg class="s" style="left:8px;top:165px;" width="22" height="21" viewBox="0 0 22 21"><path d="M11 1.5L2 4.5v6c0 5 4 8.5 9 10 5-1.5 9-5 9-10v-6z" fill="#f7c873" stroke="#d08b2a" stroke-width="1.2"/><path d="M11 6v7" stroke="#6b4a16" stroke-width="1.8"/><circle cx="11" cy="15.8" r="1" fill="#6b4a16"/></svg>
<div class="t" style="top:171.02px;font-size:11.43px;color:#262626;font-weight:normal;font-family:'Liberation Sans', sans-serif;letter-spacing:-0.197px;left:40.0px;">SECURITY WARNING</div>
<div class="t" style="top:171.44px;font-size:12px;color:#2a2a2a;font-weight:normal;font-family:'Liberation Sans', sans-serif;letter-spacing:-0.041px;left:163.5px;text-decoration:underline;">Automatic update of links has been disabled</div>
<div class="r" style="left:418px;top:164px;width:115px;height:22px;background:#ffffff;border:1px solid #b9b49a;"></div>
<div class="t" style="top:170.24px;font-size:12px;color:#333;font-weight:normal;font-family:'Liberation Sans', sans-serif;letter-spacing:-0.149px;left:434.2px;">Enable Content</div>
<svg class="s" style="left:1899px;top:169px;" width="11" height="11" viewBox="0 0 11 11"><path d="M1.5 1.5l8 8M9.5 1.5l-8 8" stroke="#444" stroke-width="1.6"/></svg>
<div class="r" style="left:0px;top:190px;width:1920px;height:66px;background:#e6e6e6;"></div>
<div class="r" style="left:6px;top:200px;width:100px;height:26px;background:#ffffff;border:1px solid #c8c8c8;"></div>
<div class="t" style="top:207.22px;font-size:12.5px;color:#333;font-weight:normal;font-family:'Liberation Sans', sans-serif;letter-spacing:0.511px;left:12.6px;">Picture 2</div>
<svg class="s" style="left:91px;top:209px;" width="10" height="6" viewBox="0 0 10 6"><path d="M0.5 0.5h9l-4.5 5z" fill="#666"/></svg>
<div class="r" style="left:121px;top:208px;width:2px;height:2px;background:#a6a6a6;"></div>
<div class="r" style="left:121px;top:212px;width:2px;height:2px;background:#a6a6a6;"></div>
<div class="r" style="left:121px;top:216px;width:2px;height:2px;background:#a6a6a6;"></div>
<div class="r" style="left:137px;top:200px;width:110px;height:26px;background:#ffffff;border:1px solid #c8c8c8;"></div>
<svg class="s" style="left:149px;top:207px;" width="12" height="12" viewBox="0 0 12 12"><path d="M1 1l10 10M11 1L1 11" stroke="#c4c4c4" stroke-width="1.3"/></svg>
<svg class="s" style="left:185px;top:206px;" width="14" height="12" viewBox="0 0 14 12"><path d="M1 6.5l4 4 8-9" fill="none" stroke="#c4c4c4" stroke-width="1.5"/></svg>
<div class="t" style="top:206.15px;font-size:14px;color:#555;font-weight:bold;font-family:'Liberation Sans', sans-serif;left:222px;font-style:italic;font-family:'Liberation Serif',serif;">f</div>
<div class="t" style="top:208.53px;font-size:10px;color:#555;font-weight:bold;font-family:'Liberation Sans', sans-serif;left:227.5px;font-style:italic;font-family:'Liberation Serif',serif;">x</div>
<div class="r" style="left:250px;top:200px;width:1665px;height:46px;background:#ffffff;border:1px solid #d4d4d4;"></div>
<svg class="s" style="left:1902px;top:208px;" width="9" height="7" viewBox="0 0 9 7"><path d="M1 5.5L4.5 2L8 5.5" fill="none" stroke="#555" stroke-width="1.7"/></svg>
<div class="r" style="left:0px;top:256px;width:1920px;height:20px;background:#e6e6e6;"></div>
<div class="t" style="top:259.00px;font-size:13px;color:#333;font-weight:normal;font-family:'Liberation Sans', sans-serif;left:57.5px;transform:translateX(-50%);">A</div>
<div class="r" style="left:89px;top:256px;width:1px;height:20px;background:#ababab;"></div>
<div class="t" style="top:259.00px;font-size:13px;color:#333;font-weight:normal;font-family:'Liberation Sans', sans-serif;left:121.5px;transform:translateX(-50%);">B</div>
<div class="r" style="left:153px;top:256px;width:1px;height:20px;background:#ababab;"></div>
<div class="t" style="top:259.00px;font-size:13px;color:#333;font-weight:normal;font-family:'Liberation Sans', sans-serif;left:319.5px;transform:translateX(-50%);">C</div>
<div class="r" style="left:485px;top:256px;width:1px;height:20px;background:#ababab;"></div>
<div class="t" style="top:259.00px;font-size:13px;color:#333;font-weight:normal;font-family:'Liberation Sans', sans-serif;left:535.5px;transform:translateX(-50%);">D</div>
<div class="r" style="left:585px;top:256px;width:1px;height:20px;background:#ababab;"></div>
<div class="t" style="top:259.00px;font-size:13px;color:#333;font-weight:normal;font-family:'Liberation Sans', sans-serif;left:617.5px;transform:translateX(-50%);">E</div>
<div class="r" style="left:649px;top:256px;width:1px;height:20px;background:#ababab;"></div>
<div class="t" style="top:259.00px;font-size:13px;color:#333;font-weight:normal;font-family:'Liberation Sans', sans-serif;left:681.5px;transform:translateX(-50%);">F</div>
<div class="r" style="left:713px;top:256px;width:1px;height:20px;background:#ababab;"></div>
<div class="t" style="top:259.00px;font-size:13px;color:#333;font-weight:normal;font-family:'Liberation Sans', sans-serif;left:745.5px;transform:translateX(-50%);">G</div>
<div class="r" style="left:777px;top:256px;width:1px;height:20px;background:#ababab;"></div>
<div class="t" style="top:259.00px;font-size:13px;color:#333;font-weight:normal;font-family:'Liberation Sans', sans-serif;left:809.5px;transform:translateX(-50%);">H</div>
<div class="r" style="left:841px;top:256px;width:1px;height:20px;background:#ababab;"></div>
<div class="t" style="top:259.00px;font-size:13px;color:#333;font-weight:normal;font-family:'Liberation Sans', sans-serif;left:873.5px;transform:translateX(-50%);">I</div>
<div class="r" style="left:905px;top:256px;width:1px;height:20px;background:#ababab;"></div>
<div class="t" style="top:259.00px;font-size:13px;color:#333;font-weight:normal;font-family:'Liberation Sans', sans-serif;left:937.5px;transform:translateX(-50%);">J</div>
<div class="r" style="left:969px;top:256px;width:1px;height:20px;background:#ababab;"></div>
<div class="t" style="top:259.00px;font-size:13px;color:#333;font-weight:normal;font-family:'Liberation Sans', sans-serif;left:1001.5px;transform:translateX(-50%);">K</div>
<div class="r" style="left:1033px;top:256px;width:1px;height:20px;background:#ababab;"></div>
<div class="t" style="top:259.00px;font-size:13px;color:#333;font-weight:normal;font-family:'Liberation Sans', sans-serif;left:1065.5px;transform:translateX(-50%);">L</div>
<div class="r" style="left:1097px;top:256px;width:1px;height:20px;background:#ababab;"></div>
<div class="t" style="top:259.00px;font-size:13px;color:#333;font-weight:normal;font-family:'Liberation Sans', sans-serif;left:1129.5px;transform:translateX(-50%);">M</div>
<div class="r" style="left:1161px;top:256px;width:1px;height:20px;background:#ababab;"></div>
<div class="t" style="top:259.00px;font-size:13px;color:#333;font-weight:normal;font-family:'Liberation Sans', sans-serif;left:1193.5px;transform:translateX(-50%);">N</div>
<div class="r" style="left:1225px;top:256px;width:1px;height:20px;background:#ababab;"></div>
<div class="t" style="top:259.00px;font-size:13px;color:#333;font-weight:normal;font-family:'Liberation Sans', sans-serif;left:1257.5px;transform:translateX(-50%);">O</div>
<div class="r" style="left:1289px;top:256px;width:1px;height:20px;background:#ababab;"></div>
<div class="t" style="top:259.00px;font-size:13px;color:#333;font-weight:normal;font-family:'Liberation Sans', sans-serif;left:1321.5px;transform:translateX(-50%);">P</div>
<div class="r" style="left:1353px;top:256px;width:1px;height:20px;background:#ababab;"></div>
<div class="t" style="top:259.00px;font-size:13px;color:#333;font-weight:normal;font-family:'Liberation Sans', sans-serif;left:1385.5px;transform:translateX(-50%);">Q</div>
<div class="r" style="left:1417px;top:256px;width:1px;height:20px;background:#ababab;"></div>
<div class="t" style="top:259.00px;font-size:13px;color:#333;font-weight:normal;font-family:'Liberation Sans', sans-serif;left:1449.5px;transform:translateX(-50%);">R</div>
<div class="r" style="left:1481px;top:256px;width:1px;height:20px;background:#ababab;"></div>
<div class="t" style="top:259.00px;font-size:13px;color:#333;font-weight:normal;font-family:'Liberation Sans', sans-serif;left:1513.5px;transform:translateX(-50%);">S</div>
<div class="r" style="left:1545px;top:256px;width:1px;height:20px;background:#ababab;"></div>
<div class="t" style="top:259.00px;font-size:13px;color:#333;font-weight:normal;font-family:'Liberation Sans', sans-serif;left:1577.5px;transform:translateX(-50%);">T</div>
<div class="r" style="left:1609px;top:256px;width:1px;height:20px;background:#ababab;"></div>
<div class="t" style="top:259.00px;font-size:13px;color:#333;font-weight:normal;font-family:'Liberation Sans', sans-serif;left:1641.5px;transform:translateX(-50%);">U</div>
<div class="r" style="left:1673px;top:256px;width:1px;height:20px;background:#ababab;"></div>
<div class="t" style="top:259.00px;font-size:13px;color:#333;font-weight:normal;font-family:'Liberation Sans', sans-serif;left:1705.5px;transform:translateX(-50%);">V</div>
<div class="r" style="left:1737px;top:256px;width:1px;height:20px;background:#ababab;"></div>
<div class="t" style="top:259.00px;font-size:13px;color:#333;font-weight:normal;font-family:'Liberation Sans', sans-serif;left:1769.5px;transform:translateX(-50%);">W</div>
<div class="r" style="left:1801px;top:256px;width:1px;height:20px;background:#ababab;"></div>
<div class="t" style="top:259.00px;font-size:13px;color:#333;font-weight:normal;font-family:'Liberation Sans', sans-serif;left:1833.5px;transform:translateX(-50%);">X</div>
<div class="r" style="left:1865px;top:256px;width:1px;height:20px;background:#ababab;"></div>
<div class="t" style="top:259.00px;font-size:13px;color:#333;font-weight:normal;font-family:'Liberation Sans', sans-serif;left:1897.5px;transform:translateX(-50%);">Y</div>
<div class="r" style="left:1929px;top:256px;width:1px;height:20px;background:#ababab;"></div>
<div class="r" style="left:25px;top:256px;width:1px;height:20px;background:#ababab;"></div>
<div class="r" style="left:1898px;top:256px;width:22px;height:20px;background:#e6e6e6;"></div>
<svg class="s" style="left:5px;top:258px;" width="17" height="16" viewBox="0 0 17 16"><path d="M17 2v13H5z" fill="#b4b4b4"/></svg>
<div class="r" style="left:0px;top:276px;width:25px;height:706px;background:#e6e6e6;"></div>
<div class="t" style="top:281.17px;font-size:12.2px;color:#333;font-weight:normal;font-family:'Liberation Sans', sans-serif;right:1900px;">16</div>
<div class="r" style="left:0px;top:295px;width:25px;height:1px;background:#c4c4c4;"></div>
<div class="t" style="top:301.17px;font-size:12.2px;color:#333;font-weight:normal;font-family:'Liberation Sans', sans-serif;right:1900px;">17</div>
<div class="r" style="left:0px;top:315px;width:25px;height:1px;background:#c4c4c4;"></div>
<div class="t" style="top:321.17px;font-size:12.2px;color:#333;font-weight:normal;font-family:'Liberation Sans', sans-serif;right:1900px;">18</div>
<div class="r" style="left:0px;top:335px;width:25px;height:1px;background:#c4c4c4;"></div>
<div class="t" style="top:341.17px;font-size:12.2px;color:#333;font-weight:normal;font-family:'Liberation Sans', sans-serif;right:1900px;">19</div>
<div class="r" style="left:0px;top:355px;width:25px;height:1px;background:#c4c4c4;"></div>
<div class="t" style="top:361.17px;font-size:12.2px;color:#333;font-weight:normal;font-family:'Liberation Sans', sans-serif;right:1900px;">20</div>
<div class="r" style="left:0px;top:375px;width:25px;height:1px;background:#c4c4c4;"></div>
<div class="t" style="top:381.17px;font-size:12.2px;color:#333;font-weight:normal;font-family:'Liberation Sans', sans-serif;right:1900px;">21</div>
<div class="r" style="left:0px;top:395px;width:25px;height:1px;background:#c4c4c4;"></div>
<div class="t" style="top:401.17px;font-size:12.2px;color:#333;font-weight:normal;font-family:'Liberation Sans', sans-serif;right:1900px;">22</div>
<div class="r" style="left:0px;top:415px;width:25px;height:1px;background:#c4c4c4;"></div>
<div class="t" style="top:421.17px;font-size:12.2px;color:#333;font-weight:normal;font-family:'Liberation Sans', sans-serif;right:1900px;">23</div>
<div class="r" style="left:0px;top:435px;width:25px;height:1px;background:#c4c4c4;"></div>
<div class="t" style="top:441.17px;font-size:12.2px;color:#333;font-weight:normal;font-family:'Liberation Sans', sans-serif;right:1900px;">24</div>
<div class="r" style="left:0px;top:455px;width:25px;height:1px;background:#c4c4c4;"></div>
<div class="t" style="top:461.17px;font-size:12.2px;color:#333;font-weight:normal;font-family:'Liberation Sans', sans-serif;right:1900px;">25</div>
<div class="r" style="left:0px;top:475px;width:25px;height:1px;background:#c4c4c4;"></div>
<div class="t" style="top:481.17px;font-size:12.2px;color:#333;font-weight:normal;font-family:'Liberation Sans', sans-serif;right:1900px;">26</div>
<div class="r" style="left:0px;top:495px;width:25px;height:1px;background:#c4c4c4;"></div>
<div class="t" style="top:501.17px;font-size:12.2px;color:#333;font-weight:normal;font-family:'Liberation Sans', sans-serif;right:1900px;">27</div>
<div class="r" style="left:0px;top:515px;width:25px;height:1px;background:#c4c4c4;"></div>
<div class="t" style="top:521.17px;font-size:12.2px;color:#333;font-weight:normal;font-family:'Liberation Sans', sans-serif;right:1900px;">28</div>
<div class="r" style="left:0px;top:535px;width:25px;height:1px;background:#c4c4c4;"></div>
<div class="t" style="top:541.17px;font-size:12.2px;color:#333;font-weight:normal;font-family:'Liberation Sans', sans-serif;right:1900px;">29</div>
<div class="r" style="left:0px;top:555px;width:25px;height:1px;background:#c4c4c4;"></div>
<div class="t" style="top:561.17px;font-size:12.2px;color:#333;font-weight:normal;font-family:'Liberation Sans', sans-serif;right:1900px;">30</div>
<div class="r" style="left:0px;top:575px;width:25px;height:1px;background:#c4c4c4;"></div>
<div class="t" style="top:581.17px;font-size:12.2px;color:#333;font-weight:normal;font-family:'Liberation Sans', sans-serif;right:1900px;">31</div>
<div class="r" style="left:0px;top:595px;width:25px;height:1px;background:#c4c4c4;"></div>
<div class="t" style="top:601.17px;font-size:12.2px;color:#333;font-weight:normal;font-family:'Liberation Sans', sans-serif;right:1900px;">32</div>
<div class="r" style="left:0px;top:615px;width:25px;height:1px;background:#c4c4c4;"></div>
<div class="t" style="top:621.17px;font-size:12.2px;color:#333;font-weight:normal;font-family:'Liberation Sans', sans-serif;right:1900px;">33</div>
<div class="r" style="left:0px;top:635px;width:25px;height:1px;background:#c4c4c4;"></div>
<div class="t" style="top:641.17px;font-size:12.2px;color:#333;font-weight:normal;font-family:'Liberation Sans', sans-serif;right:1900px;">34</div>
<div class="r" style="left:0px;top:655px;width:25px;height:1px;background:#c4c4c4;"></div>
<div class="t" style="top:661.17px;font-size:12.2px;color:#333;font-weight:normal;font-family:'Liberation Sans', sans-serif;right:1900px;">35</div>
<div class="r" style="left:0px;top:675px;width:25px;height:1px;background:#c4c4c4;"></div>
<div class="t" style="top:681.17px;font-size:12.2px;color:#333;font-weight:normal;font-family:'Liberation Sans', sans-serif;right:1900px;">36</div>
<div class="r" style="left:0px;top:695px;width:25px;height:1px;background:#c4c4c4;"></div>
<div class="t" style="top:701.17px;font-size:12.2px;color:#333;font-weight:normal;font-family:'Liberation Sans', sans-serif;right:1900px;">37</div>
<div class="r" style="left:0px;top:715px;width:25px;height:1px;background:#c4c4c4;"></div>
<div class="t" style="top:721.17px;font-size:12.2px;color:#333;font-weight:normal;font-family:'Liberation Sans', sans-serif;right:1900px;">38</div>
<div class="r" style="left:0px;top:735px;width:25px;height:1px;background:#c4c4c4;"></div>
<div class="t" style="top:741.17px;font-size:12.2px;color:#333;font-weight:normal;font-family:'Liberation Sans', sans-serif;right:1900px;">39</div>
<div class="r" style="left:0px;top:755px;width:25px;height:1px;background:#c4c4c4;"></div>
<div class="t" style="top:761.17px;font-size:12.2px;color:#333;font-weight:normal;font-family:'Liberation Sans', sans-serif;right:1900px;">40</div>
<div class="r" style="left:0px;top:775px;width:25px;height:1px;background:#c4c4c4;"></div>
<div class="t" style="top:781.17px;font-size:12.2px;color:#333;font-weight:normal;font-family:'Liberation Sans', sans-serif;right:1900px;">41</div>
<div class="r" style="left:0px;top:795px;width:25px;height:1px;background:#c4c4c4;"></div>
<div class="t" style="top:801.17px;font-size:12.2px;color:#333;font-weight:normal;font-family:'Liberation Sans', sans-serif;right:1900px;">42</div>
<div class="r" style="left:0px;top:815px;width:25px;height:1px;background:#c4c4c4;"></div>
<div class="t" style="top:821.17px;font-size:12.2px;color:#333;font-weight:normal;font-family:'Liberation Sans', sans-serif;right:1900px;">43</div>
<div class="r" style="left:0px;top:835px;width:25px;height:1px;background:#c4c4c4;"></div>
<div class="t" style="top:841.17px;font-size:12.2px;color:#333;font-weight:normal;font-family:'Liberation Sans', sans-serif;right:1900px;">44</div>
<div class="r" style="left:0px;top:855px;width:25px;height:1px;background:#c4c4c4;"></div>
<div class="t" style="top:861.17px;font-size:12.2px;color:#333;font-weight:normal;font-family:'Liberation Sans', sans-serif;right:1900px;">45</div>
<div class="r" style="left:0px;top:875px;width:25px;height:1px;background:#c4c4c4;"></div>
<div class="t" style="top:881.17px;font-size:12.2px;color:#333;font-weight:normal;font-family:'Liberation Sans', sans-serif;right:1900px;">46</div>
<div class="r" style="left:0px;top:895px;width:25px;height:1px;background:#c4c4c4;"></div>
<div class="t" style="top:901.17px;font-size:12.2px;color:#333;font-weight:normal;font-family:'Liberation Sans', sans-serif;right:1900px;">47</div>
<div class="r" style="left:0px;top:915px;width:25px;height:1px;background:#c4c4c4;"></div>
<div class="t" style="top:921.17px;font-size:12.2px;color:#333;font-weight:normal;font-family:'Liberation Sans', sans-serif;right:1900px;">48</div>
<div class="r" style="left:0px;top:935px;width:25px;height:1px;background:#c4c4c4;"></div>
<div class="t" style="top:941.17px;font-size:12.2px;color:#333;font-weight:normal;font-family:'Liberation Sans', sans-serif;right:1900px;">49</div>
<div class="r" style="left:0px;top:955px;width:25px;height:1px;background:#c4c4c4;"></div>
<div class="t" style="top:961.17px;font-size:12.2px;color:#333;font-weight:normal;font-family:'Liberation Sans', sans-serif;right:1900px;">50</div>
<div class="r" style="left:0px;top:975px;width:25px;height:1px;background:#c4c4c4;"></div>
<div class="r" style="left:0px;top:275px;width:1898px;height:1px;background:#9b9b9b;"></div>
<div class="r" style="left:25px;top:256px;width:1px;height:726px;background:#9b9b9b;"></div>
<svg class="s" style="left:26px;top:276px;shape-rendering:crispEdges;" width="1872" height="706" viewBox="0 0 1872 706"><rect x="0" y="19" width="1873" height="1" fill="#d2d2d2"/><rect x="0" y="39" width="1873" height="1" fill="#d2d2d2"/><rect x="0" y="59" width="1873" height="1" fill="#d2d2d2"/><rect x="0" y="79" width="1873" height="1" fill="#d2d2d2"/><rect x="0" y="99" width="1873" height="1" fill="#d2d2d2"/><rect x="0" y="119" width="1873" height="1" fill="#d2d2d2"/><rect x="0" y="139" width="1873" height="1" fill="#d2d2d2"/><rect x="0" y="159" width="1873" height="1" fill="#d2d2d2"/><rect x="0" y="179" width="1873" height="1" fill="#d2d2d2"/><rect x="0" y="199" width="1873" height="1" fill="#d2d2d2"/><rect x="0" y="219" width="1873" height="1" fill="#d2d2d2"/><rect x="0" y="239" width="1873" height="1" fill="#d2d2d2"/><rect x="0" y="259" width="1873" height="1" fill="#d2d2d2"/><rect x="0" y="279" width="1873" height="1" fill="#d2d2d2"/><rect x="0" y="299" width="1873" height="1" fill="#d2d2d2"/><rect x="0" y="319" width="1873" height="1" fill="#d2d2d2"/><rect x="0" y="339" width="1873" height="1" fill="#d2d2d2"/><rect x="0" y="359" width="1873" height="1" fill="#d2d2d2"/><rect x="0" y="379" width="1873" height="1" fill="#d2d2d2"/><rect x="0" y="399" width="1873" height="1" fill="#d2d2d2"/><rect x="0" y="419" width="1873" height="1" fill="#d2d2d2"/><rect x="0" y="439" width="1873" height="1" fill="#d2d2d2"/><rect x="0" y="459" width="1873" height="1" fill="#d2d2d2"/><rect x="0" y="479" width="1873" height="1" fill="#d2d2d2"/><rect x="0" y="499" width="1873" height="1" fill="#d2d2d2"/><rect x="0" y="519" width="1873" height="1" fill="#d2d2d2"/><rect x="0" y="539" width="1873" height="1" fill="#d2d2d2"/><rect x="0" y="559" width="1873" height="1" fill="#d2d2d2"/><rect x="0" y="579" width="1873" height="1" fill="#d2d2d2"/><rect x="0" y="599" width="1873" height="1" fill="#d2d2d2"/><rect x="0" y="619" width="1873" height="1" fill="#d2d2d2"/><rect x="0" y="639" width="1873" height="1" fill="#d2d2d2"/><rect x="0" y="659" width="1873" height="1" fill="#d2d2d2"/><rect x="0" y="679" width="1873" height="1" fill="#d2d2d2"/><rect x="0" y="699" width="1873" height="1" fill="#d2d2d2"/><rect x="63" y="0" width="1" height="706" fill="#d2d2d2"/><rect x="127" y="0" width="1" height="706" fill="#d2d2d2"/><rect x="459" y="0" width="1" height="706" fill="#d2d2d2"/><rect x="559" y="0" width="1" height="706" fill="#d2d2d2"/><rect x="623" y="0" width="1" height="706" fill="#d2d2d2"/><rect x="687" y="0" width="1" height="706" fill="#d2d2d2"/><rect x="751" y="0" width="1" height="706" fill="#d2d2d2"/><rect x="815" y="0" width="1" height="706" fill="#d2d2d2"/><rect x="879" y="0" width="1" height="706" fill="#d2d2d2"/><rect x="943" y="0" width="1" height="706" fill="#d2d2d2"/><rect x="1007" y="0" width="1" height="706" fill="#d2d2d2"/><rect x="1071" y="0" width="1" height="706" fill="#d2d2d2"/><rect x="1135" y="0" width="1" height="706" fill="#d2d2d2"/><rect x="1199" y="0" width="1" height="706" fill="#d2d2d2"/><rect x="1263" y="0" width="1" height="706" fill="#d2d2d2"/><rect x="1327" y="0" width="1" height="706" fill="#d2d2d2"/><rect x="1391" y="0" width="1" height="706" fill="#d2d2d2"/><rect x="1455" y="0" width="1" height="706" fill="#d2d2d2"/><rect x="1519" y="0" width="1" height="706" fill="#d2d2d2"/><rect x="1583" y="0" width="1" height="706" fill="#d2d2d2"/><rect x="1647" y="0" width="1" height="706" fill="#d2d2d2"/><rect x="1711" y="0" width="1" height="706" fill="#d2d2d2"/><rect x="1775" y="0" width="1" height="706" fill="#d2d2d2"/><rect x="1839" y="0" width="1" height="706" fill="#d2d2d2"/></svg>
<div class="r" style="left:1898px;top:276px;width:1px;height:706px;background:#9b9b9b;"></div>
<div class="t" style="top:280.00px;font-size:13px;color:#000000;font-weight:normal;font-family:'Liberation Sans', sans-serif;letter-spacing:0.4px;left:161px;">Selisih</div>
<div class="t" style="top:320.33px;font-size:12.6px;color:#000000;font-weight:bold;font-family:'Liberation Sans', sans-serif;right:1774px;">3</div>
<div class="t" style="top:320.33px;font-size:12.6px;color:#000000;font-weight:bold;font-family:'Liberation Sans', sans-serif;left:161px;">Beban Gaji</div>
<div class="t" style="top:340.00px;font-size:13px;color:#000000;font-weight:normal;font-family:'Liberation Sans', sans-serif;left:161px;">Biaya Gaji cfm SPT Tahunan</div>
<div class="t" style="top:340.00px;font-size:13px;color:#000000;font-weight:normal;font-family:'Liberation Sans', sans-serif;right:1342px;">28.640.000,00</div>
<div class="t" style="top:360.00px;font-size:13px;color:#000000;font-weight:normal;font-family:'Liberation Sans', sans-serif;left:161px;">Biaya Gaji cfm PPh 21</div>
<div class="t" style="top:360.00px;font-size:13px;color:#000000;font-weight:normal;font-family:'Liberation Sans', sans-serif;right:1342px;">28.880.000,00</div>
<div class="t" style="top:380.00px;font-size:13px;color:#000000;font-weight:normal;font-family:'Liberation Sans', sans-serif;left:488px;">-</div>
<div class="t" style="top:380.00px;font-size:13px;color:#000000;font-weight:normal;font-family:'Liberation Sans', sans-serif;right:1342px;">240.000,00</div>
<div class="t" style="top:420.33px;font-size:12.6px;color:#000000;font-weight:bold;font-family:'Liberation Sans', sans-serif;right:1774px;">4</div>
<div class="t" style="top:420.33px;font-size:12.6px;color:#000000;font-weight:bold;font-family:'Liberation Sans', sans-serif;letter-spacing:-0.25px;left:161px;">Jumlah DPP SPT Masa</div>
<div class="t" style="top:440.00px;font-size:13px;color:#000000;font-weight:normal;font-family:'Liberation Sans', sans-serif;letter-spacing:-0.38px;left:161px;">DPP PPH 4.2 Sewa</div>
<div class="t" style="top:460.00px;font-size:13px;color:#000000;font-weight:normal;font-family:'Liberation Sans', sans-serif;letter-spacing:-0.55px;left:161px;">DPP PPH 23 Jasa</div>
<div class="t" style="top:460.00px;font-size:13px;color:#000000;font-weight:normal;font-family:'Liberation Sans', sans-serif;right:1342px;">44.000,00</div>
<div class="t" style="top:500.33px;font-size:12.6px;color:#000000;font-weight:bold;font-family:'Liberation Sans', sans-serif;right:1774px;">5</div>
<div class="t" style="top:500.33px;font-size:12.6px;color:#000000;font-weight:bold;font-family:'Liberation Sans', sans-serif;left:161px;">Rincin Piutang Usaha Per Costumer</div>
<div class="t" style="top:540.33px;font-size:12.6px;color:#000000;font-weight:bold;font-family:'Liberation Sans', sans-serif;right:1774px;">6</div>
<div class="t" style="top:540.33px;font-size:12.6px;color:#000000;font-weight:bold;font-family:'Liberation Sans', sans-serif;left:161px;">Rincian Hutang Usaha Per Supplier</div>
<div class="r" style="left:714px;top:276px;width:609px;height:16px;background:#ffffff;"></div>
<div class="r" style="left:733px;top:276px;width:1px;height:7px;background:#555;"></div>
<div class="r" style="left:1289px;top:276px;width:1px;height:16px;background:#e3e3e3;"></div>
<div class="r" style="left:1023px;top:276px;width:1px;height:12px;background:#555;"></div>
<div class="r" style="left:714px;top:276px;width:609px;height:16px;overflow:hidden;"><div class="t" style="left:22px;top:-5.4px;font-size:11px;font-family:'Liberation Mono',monospace;color:#3a3a3a;transform:scaleY(0.8);transform-origin:0 8.4px;">nilai nominal saham yang disebutkan pada akhir akta.</div></div>
<div class="r" style="left:723px;top:292px;width:600px;height:444px;background:#ffffff;"></div>
<div class="t" style="top:295.46px;font-size:17.67px;color:#484848;font-weight:normal;font-family:'Liberation Mono', monospace;letter-spacing:0.17px;left:723px;transform:scaleY(0.8);transform-origin:0 13.54px;clip-path:inset(-5px -5px -5px 1px);">p1.300.000.000,- (satu miliar tiga ratus juta------</div>
<div class="t" style="top:323.46px;font-size:17.67px;color:#484848;font-weight:normal;font-family:'Liberation Mono', monospace;letter-spacing:0.17px;left:723px;transform:scaleY(0.8);transform-origin:0 13.54px;clip-path:inset(-5px -5px -5px 1px);">upiah), yaitu oleh-para pendiri atau pemegang------</div>
<div class="t" style="top:352.46px;font-size:17.67px;color:#484848;font-weight:normal;font-family:'Liberation Mono', monospace;letter-spacing:0.1px;left:725px;transform:scaleY(0.8);transform-origin:0 13.54px;">aham:----------------------------------------------</div>
<div class="t" style="top:382.96px;font-size:17.67px;color:#484848;font-weight:normal;font-family:'Liberation Mono', monospace;left:722px;transform:scaleY(0.8);transform-origin:0 13.54px;clip-path:inset(-5px -5px -5px 2px);">a.</div>
<div class="t" style="top:382.96px;font-size:17.67px;color:#484848;font-weight:normal;font-family:'Liberation Mono', monospace;left:761px;transform:scaleY(0.8);transform-origin:0 13.54px;"><b style="color:#111">ROSABELLA SARUDIN</b> sebanyak--  ------------------</div>
<div class="t" style="top:411.96px;font-size:17.67px;color:#484848;font-weight:normal;font-family:'Liberation Mono', monospace;left:761px;transform:scaleY(0.8);transform-origin:0 13.54px;">400 (empat ratus) saham-----  ------------------</div>
<div class="t" style="top:440.96px;font-size:17.67px;color:#484848;font-weight:normal;font-family:'Liberation Mono', monospace;left:761px;transform:scaleY(0.8);transform-origin:0 13.54px;">dengan nilai nominal--------  ------------------</div>
<div class="t" style="top:470.46px;font-size:17.67px;color:#484848;font-weight:normal;font-family:'Liberation Mono', monospace;left:761px;transform:scaleY(0.8);transform-origin:0 13.54px;">seluruhnya sebesar empat----  ------------------</div>
<div class="t" style="top:504.95px;font-size:14px;color:#222;font-weight:bold;font-family:'Liberation Sans', sans-serif;left:976px;transform:translateX(-50%);">25</div>
<div class="t" style="top:709.46px;font-size:17.67px;color:#484848;font-weight:normal;font-family:'Liberation Mono', monospace;left:765px;transform:scaleY(0.8);transform-origin:0 13.54px;">ratus juta Rupiah.----------  ---Rp400.000.000,-</div>
<svg class="s" style="left:723px;top:292px;" width="600" height="444" viewBox="0 0 600 444"><g fill="none" stroke="#222"><path d="M27.5 122v76l82 19" stroke-width="1.5"/><path d="M32.5 437v-25l86-12" stroke-width="1.8"/></g><rect x="0" y="319" width="600" height="2" fill="#dedede"/><rect x="0" y="321" width="600" height="4" fill="#f3f3f3"/><rect x="0" y="325" width="600" height="1" fill="#d9d9d9"/></svg>
<svg class="s" style="left:718px;top:287px;" width="610" height="454" viewBox="0 0 610 454"><rect x="5.5" y="5.5" width="599" height="443" fill="none" stroke="#555" stroke-width="1"/><circle cx="5.5" cy="5.5" r="4.6" fill="#fff" stroke="#555" stroke-width="1.6"/><circle cx="305" cy="5.5" r="4.6" fill="#fff" stroke="#555" stroke-width="1.6"/><circle cx="604.5" cy="5.5" r="4.6" fill="#fff" stroke="#555" stroke-width="1.6"/><circle cx="5.5" cy="227" r="4.6" fill="#fff" stroke="#555" stroke-width="1.6"/><circle cx="604.5" cy="227" r="4.6" fill="#fff" stroke="#555" stroke-width="1.6"/><circle cx="5.5" cy="448.5" r="4.6" fill="#fff" stroke="#555" stroke-width="1.6"/><circle cx="305" cy="448.5" r="4.6" fill="#fff" stroke="#555" stroke-width="1.6"/><circle cx="604.5" cy="448.5" r="4.6" fill="#fff" stroke="#555" stroke-width="1.6"/></svg>
<div class="r" style="left:778px;top:935px;width:582px;height:47px;background:#ffffff;"></div>
<div class="r" style="left:777px;top:935px;width:2px;height:31px;background:#222;"></div>
<div class="t" style="top:938.96px;font-size:17.67px;color:#484848;font-weight:normal;font-family:'Liberation Mono', monospace;left:788px;transform:scaleY(0.8);transform-origin:0 13.54px;">b.</div>
<div class="t" style="top:938.96px;font-size:17.67px;color:#484848;font-weight:normal;font-family:'Liberation Mono', monospace;left:826px;transform:scaleY(0.8);transform-origin:0 13.54px;"><b style="color:#111">RAE FERNANDEZ</b> sebanyak 300--  ------------------</div>
<div class="r" style="left:818px;top:966px;width:1px;height:16px;background:#222;"></div>
<div class="t" style="top:975.46px;font-size:17.67px;color:#484848;font-weight:normal;font-family:'Liberation Mono', monospace;left:830px;transform:scaleY(0.8);transform-origin:0 13.54px;">(tiga ratus) saham dengan</div>
<div class="r" style="left:1899px;top:276px;width:21px;height:706px;background:#efefef;"></div>
<div class="r" style="left:1902px;top:258px;width:15px;height:15px;background:#ffffff;border:1px solid #8c8c8c;"></div>
<svg class="s" style="left:1905px;top:262px;" width="9" height="6" viewBox="0 0 9 6"><path d="M0.5 5.5l4-5 4 5z" fill="#222"/></svg>
<div class="r" style="left:1902px;top:482px;width:15px;height:486px;background:#ffffff;border:1px solid #8c8c8c;"></div>
<div class="r" style="left:1902px;top:967px;width:15px;height:16px;background:#ffffff;border:1px solid #8c8c8c;"></div>
<svg class="s" style="left:1905px;top:973px;" width="9" height="6" viewBox="0 0 9 6"><path d="M0.5 0.5h8l-4 5z" fill="#222"/></svg>
<div class="r" style="left:0px;top:982px;width:1920px;height:28px;background:#e6e6e6;border-top:1px solid #c6c6c6;"></div>
<svg class="s" style="left:26px;top:990px;" width="6" height="9" viewBox="0 0 6 9"><path d="M5 0.5v8L0.5 4.5z" fill="#c4c4c4"/></svg>
<svg class="s" style="left:55px;top:990px;" width="6" height="9" viewBox="0 0 6 9"><path d="M1 0.5v8l4.5-4z" fill="#c4c4c4"/></svg>
<div class="r" style="left:100px;top:982px;width:83px;height:27px;background:#ffffff;border-left:1px solid #c6c6c6;border-right:1px solid #c6c6c6;"></div>
<div class="r" style="left:100px;top:1005px;width:83px;height:2px;background:#217346;"></div>
<div class="t" style="top:989.83px;font-size:12.6px;color:#1b6b3c;font-weight:bold;font-family:'Liberation Sans', sans-serif;letter-spacing:0.091px;left:112.0px;">Summary</div>
<div class="t" style="top:990.61px;font-size:11.68px;color:#333;font-weight:normal;font-family:'Liberation Sans', sans-serif;letter-spacing:-1.793px;left:194.0px;">BS</div>
<div class="t" style="top:990.61px;font-size:11.68px;color:#333;font-weight:normal;font-family:'Liberation Sans', sans-serif;letter-spacing:-0.95px;left:233.0px;">LR</div>
<div class="t" style="top:990.61px;font-size:11.68px;color:#333;font-weight:normal;font-family:'Liberation Sans', sans-serif;letter-spacing:-1.15px;left:272.8px;">TB</div>
<div class="t" style="top:990.23px;font-size:12.13px;color:#333;font-weight:normal;font-family:'Liberation Sans', sans-serif;letter-spacing:-0.197px;left:312.2px;">GL2025</div>
<div class="t" style="top:990.61px;font-size:11.68px;color:#333;font-weight:normal;font-family:'Liberation Sans', sans-serif;letter-spacing:-0.735px;left:380.0px;">RK</div>
<div class="t" style="top:989.75px;font-size:12.7px;color:#333;font-weight:normal;font-family:'Liberation Sans', sans-serif;letter-spacing:-0.001px;left:422.0px;">Pembelian</div>
<div class="t" style="top:989.75px;font-size:12.7px;color:#333;font-weight:normal;font-family:'Liberation Sans', sans-serif;letter-spacing:-0.059px;left:512.0px;">Ekualisasi bank</div>
<div class="r" style="left:221px;top:986px;width:1px;height:20px;background:#b0b0b0;"></div>
<div class="r" style="left:260px;top:986px;width:1px;height:20px;background:#b0b0b0;"></div>
<div class="r" style="left:300px;top:986px;width:1px;height:20px;background:#b0b0b0;"></div>
<div class="r" style="left:368px;top:986px;width:1px;height:20px;background:#b0b0b0;"></div>
<div class="r" style="left:408px;top:986px;width:1px;height:20px;background:#b0b0b0;"></div>
<div class="r" style="left:497px;top:986px;width:1px;height:20px;background:#b0b0b0;"></div>
<div class="r" style="left:615px;top:986px;width:1px;height:20px;background:#b0b0b0;"></div>
<div class="r" style="left:618px;top:985px;width:61px;height:22px;background:#548235;"></div>
<div class="t" style="top:990.24px;font-size:12.12px;color:#e8f3e0;font-weight:normal;font-family:'Liberation Sans', sans-serif;letter-spacing:-0.201px;left:627.5px;">PPh 21</div>
<div class="r" style="left:684px;top:985px;width:100px;height:22px;background:#ed7d31;"></div>
<div class="t" style="top:989.92px;font-size:12.5px;color:#3d1a00;font-weight:normal;font-family:'Liberation Sans', sans-serif;letter-spacing:-0.109px;left:697.0px;">PPh Unifikasi</div>
<div class="r" style="left:786px;top:986px;width:1px;height:20px;background:#b0b0b0;"></div>
<svg class="s" style="left:819px;top:987px;" width="17" height="17" viewBox="0 0 17 17"><circle cx="8.5" cy="8.5" r="7" fill="none" stroke="#777" stroke-width="1.2"/><path d="M8.5 4.5v8M4.5 8.5h8" stroke="#777" stroke-width="1.3"/></svg>
<div class="r" style="left:1203px;top:990px;width:2px;height:2px;background:#b0b0b0;"></div>
<div class="r" style="left:1203px;top:995px;width:2px;height:2px;background:#b0b0b0;"></div>
<div class="r" style="left:1203px;top:1000px;width:2px;height:2px;background:#b0b0b0;"></div>
<div class="r" style="left:1855px;top:989px;width:30px;height:15px;background:#efefef;"></div>
<div class="r" style="left:1221px;top:989px;width:15px;height:15px;background:#ffffff;border:1px solid #8c8c8c;"></div>
<div class="r" style="left:1235px;top:989px;width:621px;height:15px;background:#ffffff;border:1px solid #8c8c8c;"></div>
<div class="r" style="left:1884px;top:989px;width:15px;height:15px;background:#ffffff;border:1px solid #8c8c8c;"></div>
<svg class="s" style="left:1225px;top:992px;" width="6" height="9" viewBox="0 0 6 9"><path d="M5 0.5v8L0.5 4.5z" fill="#222"/></svg>
<svg class="s" style="left:1889px;top:992px;" width="6" height="9" viewBox="0 0 6 9"><path d="M1 0.5v8l4.5-4z" fill="#222"/></svg>
<div class="r" style="left:0px;top:1010px;width:1920px;height:22px;background:#f3f1f0;border-top:1px solid #b4b4b4;"></div>
<div class="t" style="top:1017.27px;font-size:10.9px;color:#444;font-weight:normal;font-family:'Liberation Sans', sans-serif;letter-spacing:-0.2px;left:8.3px;">Ready</div>
<svg class="s" style="left:57px;top:1014px;" width="16" height="15" viewBox="0 0 16 15"><g fill="none" stroke="#555" stroke-width="1"><rect x="0.5" y="0.5" width="13" height="12"/><path d="M0.5 3.5h13M2.5 6h4M2.5 8.5h3"/><circle cx="10" cy="9.5" r="3.2" fill="#f3f2f1"/><circle cx="10" cy="9.5" r="1.4" fill="#555"/></g></svg>
<svg class="s" style="left:89px;top:1013px;" width="15" height="17" viewBox="0 0 15 17"><g fill="none" stroke="#555" stroke-width="1"><circle cx="7" cy="2.5" r="1.8"/><path d="M1 5.5h12M7 5.5v5l-4 5.5M7 10.5l4 5.5"/><path d="M9 11l5 5M14 11l-5 5" stroke-width="1.1"/></g></svg>
<div class="t" style="top:1016.61px;font-size:11.8px;color:#444;font-weight:normal;font-family:'Liberation Sans', sans-serif;letter-spacing:-0.216px;left:107.2px;">Accessibility: Investigate</div>
<div class="r" style="left:1620px;top:1011px;width:40px;height:21px;background:#d3d1cf;"></div>
<svg class="s" style="left:1632px;top:1013px;" width="16" height="15" viewBox="0 0 16 15"><g fill="none" stroke="#333" stroke-width="1.1"><rect x="1.5" y="1.5" width="12.5" height="12.5"/><path d="M1.5 5.7h12.5M1.5 9.8h12.5M5.7 1.5v12.5M9.8 1.5v12.5"/></g></svg>
<svg class="s" style="left:1672px;top:1013px;" width="16" height="15" viewBox="0 0 16 15"><g fill="none" stroke="#333" stroke-width="1.1"><rect x="1.5" y="1.5" width="12.5" height="12.5"/><rect x="4" y="3.5" width="7.5" height="8.5"/><path d="M5.5 6h4.5M5.5 8h4.5M5.5 10h4.5" stroke-width="0.9"/></g></svg>
<svg class="s" style="left:1712px;top:1013px;" width="16" height="15" viewBox="0 0 16 15"><g fill="none" stroke="#333" stroke-width="1.1"><rect x="1.5" y="1.5" width="12.5" height="12.5"/><path d="M1.5 10.5h8.5V1.5M6 1.5v9"/></g></svg>
<div class="r" style="left:1746px;top:1021px;width:8px;height:1px;background:#555;"></div>
<div class="r" style="left:1760px;top:1021px;width:99px;height:1px;background:#777;"></div>
<div class="r" style="left:1806px;top:1016px;width:5px;height:11px;background:#444;"></div>
<div class="r" style="left:1862px;top:1021px;width:9px;height:1px;background:#555;"></div>
<div class="r" style="left:1866px;top:1017px;width:1px;height:9px;background:#555;"></div>
<div class="t" style="top:1016.04px;font-size:10.58px;color:#555;font-weight:normal;font-family:'Liberation Sans', sans-serif;letter-spacing:-0.362px;left:1885.0px;">100%</div>
<div class="r" style="left:0;top:1032px;width:1920px;height:48px;background:linear-gradient(90deg,#d9dae6 0%,#d9d8e8 40%,#dbdaea 70%,#d9d8e8 100%);border-top:1px solid #a9a9b2;"></div>
<svg class="s" style="left:17px;top:1046px;" width="30" height="22" viewBox="0 0 30 22"><path d="M6 19c-4 0-5-5-1-6 1-4 6-5 8-2 2-2 6-1 6 2 4 0 4 6 0 6z" fill="#bcd3ee" stroke="#9bb8dd" stroke-width="0.8"/></svg>
<svg class="s" style="left:29px;top:1038px;" width="18" height="18" viewBox="0 0 18 18"><circle cx="9" cy="9" r="8" fill="#c42b1c"/><text x="9" y="13" text-anchor="middle" font-size="11" font-family="Liberation Sans" fill="#fff">2</text></svg>
<div class="t" style="top:1042.59px;font-size:11.12px;color:#1a1a1a;font-weight:normal;font-family:'Liberation Sans', sans-serif;letter-spacing:-0.201px;left:50.75px;">30°C</div>
<div class="t" style="top:1058.01px;font-size:11.8px;color:#444;font-weight:normal;font-family:'Liberation Sans', sans-serif;letter-spacing:-0.175px;left:50.0px;">Berawan</div>
<svg class="s" style="left:595px;top:1045px;" width="24" height="24" viewBox="0 0 24 24"><defs><linearGradient id="wg" x1="0" y1="0" x2="1" y2="1"><stop offset="0" stop-color="#2ab4f5"/><stop offset="1" stop-color="#0a6fd6"/></linearGradient></defs><rect x="0" y="0" width="11" height="11" fill="url(#wg)"/><rect x="12" y="0" width="11" height="11" fill="url(#wg)"/><rect x="0" y="12" width="11" height="11" fill="url(#wg)"/><rect x="12" y="12" width="11" height="11" fill="url(#wg)"/></svg>
<div class="r" style="left:632px;top:1041px;width:218px;height:30px;background:#f3f4f9;border:1px solid #d9dbe6;border-radius:15px;"></div>
<svg class="s" style="left:642px;top:1047px;" width="18" height="18" viewBox="0 0 18 18"><g fill="none" stroke="#222" stroke-width="1.6"><circle cx="7.5" cy="7.5" r="5.5"/><path d="M11.5 11.5l5 5"/></g></svg>
<div class="t" style="top:1050.25px;font-size:13px;color:#555;font-weight:normal;font-family:'Liberation Sans', sans-serif;letter-spacing:-0.092px;left:668.0px;">Search</div>
<svg class="s" style="left:800px;top:1042px;" width="44" height="30" viewBox="0 0 44 30"><ellipse cx="24" cy="25.5" rx="19" ry="3" fill="#e6d2b0"/><path d="M5 6l3-3 3 1 2 5c3 1 9 1 14 1 3 0 5 2 5 5l1 6-1 5h-1l-1-6-2 2v4h-1l-1-6c-3 1-7 1-10 0l-1 6h-1l-1-6-1 6h-1l-1-8c-2-2-3-4-4-7L7 9z" fill="#f4f4f4" stroke="#333" stroke-width="0.9"/><g stroke="#222" stroke-width="1.3"><path d="M9 5l1 4M12 7l1 3M16 10l-1 5M19 10v6M22 10l1 6M25 10l-1 7M28 11l-1 5"/></g><path d="M32 16l2 6" stroke="#333" stroke-width="1"/></svg>
<svg class="s" style="left:863px;top:1044px;" width="19" height="23" viewBox="0 0 19 23"><rect x="5" y="2" width="13" height="13" fill="#f8f8f8" stroke="#ddd"/><rect x="1" y="8" width="13" height="14" fill="#222"/><rect x="5" y="8" width="9" height="10" fill="#d8d8d8"/></svg>
<svg class="s" style="left:906px;top:1044px;" width="26" height="26" viewBox="0 0 26 26"><circle cx="13" cy="12.5" r="11" fill="#fff" stroke="#25a04a" stroke-width="2.2"/><path d="M3 24l2-6" stroke="#25a04a" stroke-width="2.5"/><path d="M9 8c0 5 4 9 9 9l1.5-2.5-2.5-1.5-1.5 1.5c-2-1-3.5-2.5-4.5-4.5l1.5-1.5-1.5-2.5z" fill="#25a04a"/></svg>
<div class="r" style="left:915px;top:1072px;width:8px;height:2px;background:#7a7a80;"></div>
<svg class="s" style="left:950px;top:1044px;" width="26" height="26" viewBox="0 0 26 26"><defs><linearGradient id="eg" x1="0" y1="0" x2="1" y2="1"><stop offset="0" stop-color="#3bd17a"/><stop offset="0.5" stop-color="#1e8fd8"/><stop offset="1" stop-color="#0b5fb5"/></linearGradient></defs><circle cx="13" cy="13" r="12" fill="url(#eg)"/><path d="M7 14c0-5 8-6 11-2-2-1-6-1-6 3s5 5 8 3c-3 4-13 4-13-4z" fill="#fff" opacity="0.85"/></svg>
<svg class="s" style="left:994px;top:1046px;" width="26" height="22" viewBox="0 0 26 22"><path d="M1 3h9l2 2h13v16H1z" fill="#f6c543"/><rect x="1" y="7" width="24" height="14" fill="#ffd75e"/><rect x="7" y="14" width="12" height="6" fill="#1f7ad3"/></svg>
<div class="r" style="left:1003px;top:1072px;width:8px;height:2px;background:#7a7a80;"></div>
<svg class="s" style="left:1038px;top:1044px;" width="26" height="26" viewBox="0 0 26 26"><circle cx="13" cy="13" r="12" fill="#e3392f"/><path d="M13 13L2.6 19A12 12 0 0 0 13 25z" fill="#2fa44f"/><path d="M13 13L2.6 19A12 12 0 0 1 3 6.5L13 13z" fill="#2fa44f"/><path d="M13 13h12A12 12 0 0 1 13 25z" fill="#f8c73a"/><circle cx="13" cy="13" r="5.5" fill="#fff"/><circle cx="13" cy="13" r="4.2" fill="#3f84e8"/></svg>
<svg class="s" style="left:1051px;top:1037px;" width="16" height="16" viewBox="0 0 16 16"><circle cx="8" cy="8" r="7" fill="#a8322b" stroke="#fff" stroke-width="1"/><circle cx="8" cy="6.5" r="2.5" fill="#f2d6c5"/><path d="M3.5 13c1-3 8-3 9 0" fill="#f2d6c5"/></svg>
<div class="r" style="left:1047px;top:1072px;width:8px;height:2px;background:#7a7a80;"></div>
<svg class="s" style="left:1083px;top:1044px;" width="26" height="26" viewBox="0 0 26 26"><circle cx="13" cy="13" r="12" fill="#1ed760"/><g fill="none" stroke="#111" stroke-linecap="round"><path d="M6.5 9.5c4-1.5 9-1 13 1" stroke-width="2.2"/><path d="M7 13.5c3.5-1 7.5-.7 11 1" stroke-width="1.9"/><path d="M7.5 17c3-.8 6-.5 9 .8" stroke-width="1.6"/></g></svg>
<div class="r" style="left:1091px;top:1072px;width:8px;height:2px;background:#7a7a80;"></div>
<svg class="s" style="left:1127px;top:1043px;" width="26" height="28" viewBox="0 0 26 28"><path d="M2 3h10M2 3v10" stroke="#e1473b" stroke-width="3" stroke-dasharray="3 1.5"/><path d="M14 12v9M14 21l-3 4M14 21l8-8" stroke="#555" stroke-width="1.5" fill="none"/><circle cx="12" cy="25" r="2" fill="none" stroke="#2b8ae3" stroke-width="1.5"/><circle cx="23" cy="15" r="2" fill="none" stroke="#2b8ae3" stroke-width="1.5"/></svg>
<svg class="s" style="left:1171px;top:1044px;" width="26" height="26" viewBox="0 0 26 26"><circle cx="13" cy="13" r="12" fill="#e9475a"/><path d="M7.5 20L13 6l5.5 14" fill="none" stroke="#fff" stroke-width="2.2"/></svg>
<div class="r" style="left:1179px;top:1072px;width:8px;height:2px;background:#7a7a80;"></div>
<div class="r" style="left:1208px;top:1037px;width:37px;height:38px;background:#eceef8;border:1px solid #d9dcea;border-radius:4px;"></div>
<svg class="s" style="left:1214px;top:1044px;" width="26" height="24" viewBox="0 0 26 24"><rect x="7" y="1" width="18" height="22" rx="1.5" fill="#21a366"/><rect x="16" y="1" width="9" height="7.5" fill="#33c481"/><rect x="7" y="8.5" width="18" height="7.5" fill="#107c41"/><rect x="16" y="16" width="9" height="7" fill="#185c37"/><rect x="0" y="5" width="13" height="13" rx="1.5" fill="#107c41"/><path d="M3.5 8l6 7M9.5 8l-6 7" stroke="#fff" stroke-width="1.8"/></svg>
<div class="r" style="left:1219px;top:1072px;width:15px;height:3px;background:#0a64c8;border-radius:2px;"></div>
<svg class="s" style="left:1258px;top:1044px;" width="26" height="26" viewBox="0 0 26 26"><circle cx="13" cy="13" r="12" fill="#e3392f"/><path d="M13 13L2.6 19A12 12 0 0 0 13 25z" fill="#2fa44f"/><path d="M13 13L2.6 19A12 12 0 0 1 3 6.5L13 13z" fill="#2fa44f"/><path d="M13 13h12A12 12 0 0 1 13 25z" fill="#f8c73a"/><circle cx="13" cy="13" r="5.5" fill="#fff"/><circle cx="13" cy="13" r="4.2" fill="#3f84e8"/></svg>
<svg class="s" style="left:1270px;top:1040px;" width="12" height="12" viewBox="0 0 12 12"><path d="M2 10L9 2M9 2l2 3M9 2L6 2" stroke="#888" stroke-width="1.2" fill="none"/></svg>
<svg class="s" style="left:1302px;top:1044px;" width="25" height="25" viewBox="0 0 25 25"><rect x="0.5" y="0.5" width="24" height="24" rx="3" fill="#c6140f"/><path d="M5 19c3-3 6-9 7-14 0 3 2 8 8 9-5-1-10 2-15 5z" fill="none" stroke="#fff" stroke-width="1.8"/></svg>
<div class="r" style="left:1311px;top:1072px;width:8px;height:2px;background:#7a7a80;"></div>
<svg class="s" style="left:1728px;top:1051px;" width="13" height="9" viewBox="0 0 13 9"><path d="M1 7.5l5.5-5.5 5.5 5.5" fill="none" stroke="#222" stroke-width="1.3"/></svg>
<svg class="s" style="left:1756px;top:1047px;" width="20" height="17" viewBox="0 0 20 17"><g fill="none" stroke="#222" stroke-width="1.3"><path d="M1.5 6a12 12 0 0 1 17 0"/><path d="M4.5 9a8 8 0 0 1 11 0"/><path d="M7.5 12a4 4 0 0 1 5 0"/></g><circle cx="10" cy="14.8" r="1.3" fill="#222"/></svg>
<svg class="s" style="left:1781px;top:1047px;" width="17" height="17" viewBox="0 0 17 17"><g fill="none" stroke="#222" stroke-width="1.2"><path d="M1.5 6h3l4-4v13l-4-4h-3z"/><path d="M11 5.5a4 4 0 0 1 0 6M13.5 3.5a7 7 0 0 1 0 10"/></g></svg>
<div class="t" style="top:1042.03px;font-size:11.66px;color:#1a1a1a;font-weight:normal;font-family:'Liberation Sans', sans-serif;letter-spacing:-0.202px;left:1848.3px;">14:30</div>
<div class="t" style="top:1058.14px;font-size:12px;color:#1a1a1a;font-weight:normal;font-family:'Liberation Sans', sans-serif;letter-spacing:0.104px;left:1815.7px;">31/01/2026</div>
<svg class="s" style="left:1883px;top:1045px;" width="18" height="20" viewBox="0 0 18 20"><path d="M3 14V9a6 6 0 0 1 12 0v5l2 2H1z" fill="#222"/><circle cx="9" cy="17.5" r="1.8" fill="#222"/><text x="6" y="12" font-size="7" font-family="Liberation Sans" font-weight="bold" fill="#fff">z</text><text x="12" y="6" font-size="7" font-family="Liberation Sans" font-weight="bold" fill="#222">z</text></svg>
</body></html>
